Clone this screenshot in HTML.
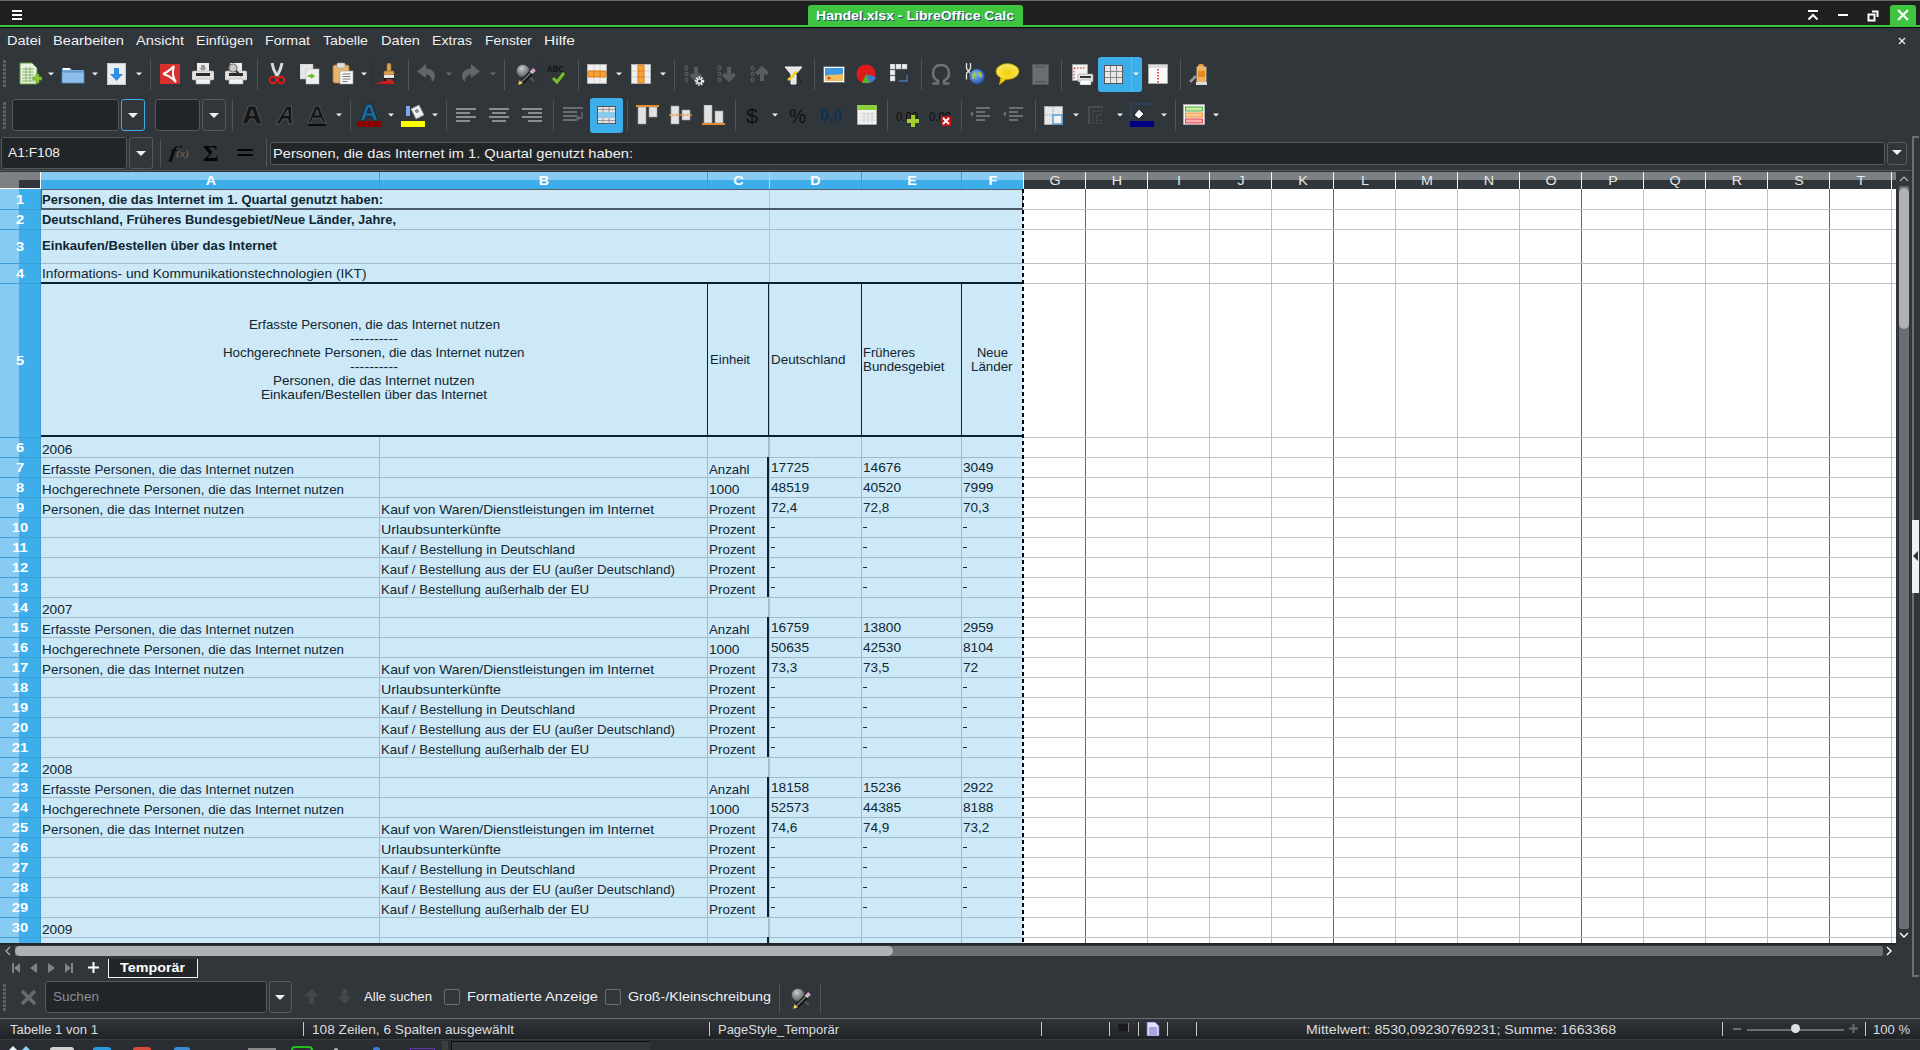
<!DOCTYPE html><html><head><meta charset="utf-8"><style>
html,body{margin:0;padding:0;}
body{width:1920px;height:1050px;overflow:hidden;position:relative;background:#31363b;font-family:"Liberation Sans",sans-serif;}
body>div{position:absolute;}
.t{white-space:pre;transform-origin:0 0;}
</style></head><body>
<div style="left:0px;top:0px;width:1920px;height:1px;background:#6b6b6b;"></div>
<div style="left:0px;top:1px;width:1920px;height:24px;background:#202020;"></div>
<div style="left:0px;top:25px;width:1920px;height:2px;background:#3ec43e;"></div>
<div style="left:0px;top:27px;width:1920px;height:1px;background:#0a0a0a;"></div>
<div style="left:12px;top:10px;width:10px;height:2px;background:#ffffff;"></div>
<div style="left:12px;top:14px;width:10px;height:2px;background:#ffffff;"></div>
<div style="left:12px;top:18px;width:10px;height:2px;background:#ffffff;"></div>
<div style="left:808px;top:5px;width:215px;height:22px;background:#3ec43e;border-radius:3px 3px 0 0;"></div>
<div class="t" style="left:816.00px;top:9.00px;font-size:13px;line-height:13px;color:#ffffff;font-weight:700;font-family:'Liberation Sans',sans-serif;transform:scaleX(1.0789);text-shadow:1px 1px 0 #2a4a7a;">Handel.xlsx - LibreOffice Calc</div>
<svg style="position:absolute;left:1806px;top:8px;" width="14" height="14" viewBox="0 0 14 14"><path d="M2 3h10" stroke="#fff" stroke-width="2"/><path d="M2.5 11.5L7 7l4.5 4.5" stroke="#fff" stroke-width="2" fill="none"/></svg>
<div style="left:1838px;top:14px;width:10px;height:2px;background:#ffffff;"></div>
<svg style="position:absolute;left:1866px;top:8px;" width="14" height="14" viewBox="0 0 14 14"><rect x="2.5" y="6.5" width="6" height="6" stroke="#fff" stroke-width="2" fill="none"/><path d="M6 3.5h5.5v5.5" stroke="#fff" stroke-width="2" fill="none"/></svg>
<div style="left:1890px;top:5px;width:26px;height:20px;background:#3ec43e;border-radius:3px 3px 0 0;"></div>
<svg style="position:absolute;left:1896px;top:8px;" width="14" height="14" viewBox="0 0 14 14"><path d="M2 2l10 10M12 2L2 12" stroke="#fff" stroke-width="2.2"/></svg>
<div style="left:0px;top:28px;width:1920px;height:142px;background:#31363b;"></div>
<div class="t" style="left:7.00px;top:33.57px;font-size:13.5px;line-height:13.5px;color:#eff0f1;font-weight:400;font-family:'Liberation Sans',sans-serif;transform:scaleX(1.0788);">Datei</div>
<div class="t" style="left:53.00px;top:33.57px;font-size:13.5px;line-height:13.5px;color:#eff0f1;font-weight:400;font-family:'Liberation Sans',sans-serif;transform:scaleX(1.0871);">Bearbeiten</div>
<div class="t" style="left:136.00px;top:33.57px;font-size:13.5px;line-height:13.5px;color:#eff0f1;font-weight:400;font-family:'Liberation Sans',sans-serif;transform:scaleX(1.0840);">Ansicht</div>
<div class="t" style="left:196.00px;top:33.57px;font-size:13.5px;line-height:13.5px;color:#eff0f1;font-weight:400;font-family:'Liberation Sans',sans-serif;transform:scaleX(1.0695);">Einfügen</div>
<div class="t" style="left:265.00px;top:33.57px;font-size:13.5px;line-height:13.5px;color:#eff0f1;font-weight:400;font-family:'Liberation Sans',sans-serif;transform:scaleX(1.0522);">Format</div>
<div class="t" style="left:323.00px;top:33.57px;font-size:13.5px;line-height:13.5px;color:#eff0f1;font-weight:400;font-family:'Liberation Sans',sans-serif;transform:scaleX(1.0519);">Tabelle</div>
<div class="t" style="left:381.00px;top:33.57px;font-size:13.5px;line-height:13.5px;color:#eff0f1;font-weight:400;font-family:'Liberation Sans',sans-serif;transform:scaleX(1.0824);">Daten</div>
<div class="t" style="left:432.00px;top:33.57px;font-size:13.5px;line-height:13.5px;color:#eff0f1;font-weight:400;font-family:'Liberation Sans',sans-serif;transform:scaleX(1.0453);">Extras</div>
<div class="t" style="left:485.00px;top:33.57px;font-size:13.5px;line-height:13.5px;color:#eff0f1;font-weight:400;font-family:'Liberation Sans',sans-serif;transform:scaleX(1.0266);">Fenster</div>
<div class="t" style="left:544.00px;top:33.57px;font-size:13.5px;line-height:13.5px;color:#eff0f1;font-weight:400;font-family:'Liberation Sans',sans-serif;transform:scaleX(1.1475);">Hilfe</div>
<svg style="position:absolute;left:1897px;top:36px;" width="10" height="10" viewBox="0 0 10 10"><path d="M2 2l6 6M8 2L2 8" stroke="#eff0f1" stroke-width="1.3"/></svg>
<div style="left:3px;top:60px;width:3px;height:3px;background:#5d6166;"></div>
<div style="left:3px;top:64px;width:3px;height:3px;background:#5d6166;"></div>
<div style="left:3px;top:68px;width:3px;height:3px;background:#5d6166;"></div>
<div style="left:3px;top:72px;width:3px;height:3px;background:#5d6166;"></div>
<div style="left:3px;top:76px;width:3px;height:3px;background:#5d6166;"></div>
<div style="left:3px;top:80px;width:3px;height:3px;background:#5d6166;"></div>
<div style="left:3px;top:84px;width:3px;height:3px;background:#5d6166;"></div>
<div style="left:3px;top:102px;width:3px;height:3px;background:#5d6166;"></div>
<div style="left:3px;top:106px;width:3px;height:3px;background:#5d6166;"></div>
<div style="left:3px;top:110px;width:3px;height:3px;background:#5d6166;"></div>
<div style="left:3px;top:114px;width:3px;height:3px;background:#5d6166;"></div>
<div style="left:3px;top:118px;width:3px;height:3px;background:#5d6166;"></div>
<div style="left:3px;top:122px;width:3px;height:3px;background:#5d6166;"></div>
<div style="left:3px;top:126px;width:3px;height:3px;background:#5d6166;"></div>
<svg style="position:absolute;left:18px;top:62px;" width="24" height="24" viewBox="0 0 24 24"><path d="M2 1h12l5 5v16H2z" fill="#e9f3e0" stroke="#5a9a3a"/><g stroke="#8ab070" stroke-width="1"><path d="M4 7h12M4 10h12M4 13h12M4 16h12M4 19h12M8 5v15M12 5v15"/></g><path d="M15 15h3v-3h3v3h3v3h-3v3h-3v-3h-3z" fill="#8fce3a" stroke="#5c9a20" stroke-width=".8"/></svg>
<svg style="position:absolute;left:48.0px;top:72px;" width="6" height="4" viewBox="0 0 6 4"><path d="M0 0.5h6L3.0 3.5z" fill="#eff0f1"/></svg>
<svg style="position:absolute;left:61px;top:65px;" width="24" height="19" viewBox="0 0 24 19"><path d="M1 3h8l2 2h12v13H1z" fill="#6fa8d8"/><path d="M1 7h22v11H1z" fill="#8cc0ea" stroke="#5a8ab5" stroke-width=".8"/><path d="M2 4h7" stroke="#fff" stroke-width="2"/></svg>
<svg style="position:absolute;left:92.0px;top:72px;" width="6" height="4" viewBox="0 0 6 4"><path d="M0 0.5h6L3.0 3.5z" fill="#eff0f1"/></svg>
<svg style="position:absolute;left:107px;top:63px;" width="19" height="22" viewBox="0 0 19 22"><rect x=".5" y=".5" width="18" height="21" fill="#ececec" stroke="#c8c8c8"/><path d="M7 5h5v6h4l-6.5 7L3 11h4z" fill="#2f8fe0"/></svg>
<svg style="position:absolute;left:136.0px;top:72px;" width="6" height="4" viewBox="0 0 6 4"><path d="M0 0.5h6L3.0 3.5z" fill="#eff0f1"/></svg>
<div style="left:150px;top:59px;width:1px;height:31px;background:#50555a;"></div>
<svg style="position:absolute;left:160px;top:64px;" width="20" height="20" viewBox="0 0 20 20"><rect x="0" y="0" width="20" height="20" fill="#d8302a"/><path d="M3 10C8 8 12 4 14 2M14 2c-2 6-1 12 2 16M3 10c5 1 9 4 13 8" stroke="#fff" stroke-width="2" fill="none"/></svg>
<svg style="position:absolute;left:192px;top:63px;" width="22" height="22" viewBox="0 0 22 22"><rect x="5" y="0" width="12" height="9" fill="#ececec"/><rect x="0" y="8" width="22" height="9" rx="1.5" fill="#e0e0e0" stroke="#bbb" stroke-width=".6"/><rect x="4" y="10" width="14" height="3" fill="#2b2b2b"/><rect x="4" y="16" width="14" height="5" fill="#f4f4f4" stroke="#aaa" stroke-width=".6"/><path d="M9 2h4v3h2l-4 3-4-3h2z" fill="#999"/></svg>
<svg style="position:absolute;left:225px;top:63px;" width="22" height="22" viewBox="0 0 22 22"><rect x="5" y="0" width="12" height="9" fill="#ececec"/><rect x="0" y="8" width="22" height="9" rx="1.5" fill="#e0e0e0" stroke="#bbb" stroke-width=".6"/><rect x="4" y="10" width="14" height="3" fill="#2b2b2b"/><rect x="4" y="16" width="14" height="5" fill="#f4f4f4" stroke="#aaa" stroke-width=".6"/><circle cx="8" cy="5" r="4" fill="#c8c8c8" stroke="#777" stroke-width="1.2"/><path d="M11 8l5 5" stroke="#333" stroke-width="2"/></svg>
<div style="left:257px;top:59px;width:1px;height:31px;background:#50555a;"></div>
<svg style="position:absolute;left:268px;top:62px;" width="18" height="23" viewBox="0 0 18 23"><path d="M4 1c1 6 3 10 5 13M14 1c-1 6-3 10-5 13" stroke="#d9d9d9" stroke-width="3" fill="none"/><circle cx="5" cy="18" r="3.2" fill="none" stroke="#e01818" stroke-width="2"/><circle cx="13" cy="18" r="3.2" fill="none" stroke="#e01818" stroke-width="2"/></svg>
<svg style="position:absolute;left:300px;top:64px;" width="20" height="21" viewBox="0 0 20 21"><rect x="0" y="0" width="13" height="15" fill="#e6e6e6" stroke="#bbb" stroke-width=".6"/><rect x="6" y="5" width="13" height="15" fill="#efefef" stroke="#bbb" stroke-width=".6"/><path d="M8 12h5l-2-2M13 12l-2 2" stroke="#6cbf2a" stroke-width="2" fill="none"/></svg>
<svg style="position:absolute;left:332px;top:62px;" width="22" height="23" viewBox="0 0 22 23"><rect x="1" y="3" width="16" height="18" rx="2" fill="#e6b46a" stroke="#b07a30" stroke-width=".8"/><rect x="5" y="1" width="8" height="5" rx="1" fill="#e0e0e0" stroke="#999" stroke-width=".6"/><rect x="8" y="9" width="13" height="13" fill="#f8f8f8" stroke="#999" stroke-width=".6"/><path d="M10.5 12h8M10.5 14.5h8M10.5 17h8M10.5 19.5h5" stroke="#777" stroke-width="1"/></svg>
<svg style="position:absolute;left:361.0px;top:72px;" width="6" height="4" viewBox="0 0 6 4"><path d="M0 0.5h6L3.0 3.5z" fill="#eff0f1"/></svg>
<div style="left:371px;top:59px;width:1px;height:31px;background:#2c3035;"></div>
<svg style="position:absolute;left:375px;top:63px;" width="22" height="23" viewBox="0 0 22 23"><rect x="12" y="0" width="4" height="9" rx="2" fill="#e0a050" stroke="#a06a20" stroke-width=".6"/><rect x="9" y="8" width="10" height="4" rx="1" fill="#d8a050" stroke="#a06a20" stroke-width=".6"/><rect x="9" y="12" width="10" height="3" fill="#e8e8e8"/><rect x="9" y="15" width="10" height="5" fill="#181818"/><path d="M9 18h10v3H0z" fill="#d81818"/><path d="M11 17h7" stroke="#f06060" stroke-width="1"/></svg>
<div style="left:408px;top:59px;width:1px;height:31px;background:#50555a;"></div>
<svg style="position:absolute;left:417px;top:64px;" width="18" height="18" viewBox="0 0 18 18"><path d="M0 7.5L9 0V4.5C14 4.5 18 8 18 12C18 14.5 16.5 16.8 14.5 18C15.5 14.5 13 10.8 9 10.5V14Z" fill="#62666a"/></svg>
<svg style="position:absolute;left:446.0px;top:72px;" width="6" height="4" viewBox="0 0 6 4"><path d="M0 0.5h6L3.0 3.5z" fill="#6a6e72"/></svg>
<svg style="position:absolute;left:462px;top:64px;" width="18" height="18" viewBox="0 0 18 18"><path transform="translate(18 0) scale(-1 1)" d="M0 7.5L9 0V4.5C14 4.5 18 8 18 12C18 14.5 16.5 16.8 14.5 18C15.5 14.5 13 10.8 9 10.5V14Z" fill="#62666a"/></svg>
<svg style="position:absolute;left:490.0px;top:72px;" width="6" height="4" viewBox="0 0 6 4"><path d="M0 0.5h6L3.0 3.5z" fill="#6a6e72"/></svg>
<div style="left:504px;top:59px;width:1px;height:31px;background:#50555a;"></div>
<svg style="position:absolute;left:514px;top:62px;" width="24" height="24" viewBox="0 0 24 24"><defs><radialGradient id="mg" cx="40%" cy="30%" r="70%"><stop offset="0" stop-color="#c8c8c8"/><stop offset="1" stop-color="#5a5c5e"/></radialGradient></defs><circle cx="9" cy="9" r="6.5" fill="url(#mg)" stroke="#3a3c3e" stroke-width=".8"/><path d="M14 14l6 5" stroke="#555" stroke-width="2.2"/><path d="M6.5 21.5l11-11" stroke="#111" stroke-width="4.6"/><path d="M7 20.5l10-10" stroke="#666" stroke-width="2"/><path d="M15.8 9.5l1.6-1.6 2.6 2.6-1.6 1.6z" fill="#cfcfcf"/><path d="M17.4 7.9l1.8-1.8 2.6 2.6-1.8 1.8z" fill="#e8a0e0"/><path d="M4 23l1.5-5 3.5 3.5z" fill="#f0e070" stroke="#6a6020" stroke-width=".6"/></svg>
<div style="left:541px;top:59px;width:1px;height:31px;background:#2c3035;"></div>
<div class="t" style="left:547.00px;top:65.38px;font-size:9px;line-height:9px;color:#111111;font-weight:700;font-family:'Liberation Sans',sans-serif;transform:scaleX(0.8718);">ABC</div>
<svg style="position:absolute;left:552px;top:72px;" width="13" height="12" viewBox="0 0 13 12"><path d="M1 6l4 4 7-9" stroke="#72c02c" stroke-width="3" fill="none"/></svg>
<div style="left:578px;top:59px;width:1px;height:31px;background:#50555a;"></div>
<svg style="position:absolute;left:587px;top:64px;" width="20" height="20" viewBox="0 0 20 20"><rect x=".5" y=".5" width="19" height="19" fill="#f0f0f0" stroke="#bbb" stroke-width=".8"/><path d="M7 1v18M13 1v18M1 7h18M1 13h18" stroke="#ccc" stroke-width=".8"/><rect x="1" y="7" width="18" height="6" rx="1" fill="#f7a23a" stroke="#d87000" stroke-width=".8"/><path d="M7 7v6M13 7v6" stroke="#d87000" stroke-width=".8"/></svg>
<svg style="position:absolute;left:616.0px;top:72px;" width="6" height="4" viewBox="0 0 6 4"><path d="M0 0.5h6L3.0 3.5z" fill="#eff0f1"/></svg>
<svg style="position:absolute;left:631px;top:64px;" width="20" height="20" viewBox="0 0 20 20"><rect x=".5" y=".5" width="19" height="19" fill="#f0f0f0" stroke="#bbb" stroke-width=".8"/><path d="M7 1v18M13 1v18M1 7h18M1 13h18" stroke="#ccc" stroke-width=".8"/><rect x="7" y="1" width="6" height="18" rx="1" fill="#f7a23a" stroke="#d87000" stroke-width=".8"/><path d="M7 7h6M7 13h6" stroke="#d87000" stroke-width=".8"/></svg>
<svg style="position:absolute;left:660.0px;top:72px;" width="6" height="4" viewBox="0 0 6 4"><path d="M0 0.5h6L3.0 3.5z" fill="#eff0f1"/></svg>
<div style="left:674px;top:59px;width:1px;height:31px;background:#50555a;"></div>
<svg style="position:absolute;left:683px;top:64px;" width="24" height="24" viewBox="0 0 24 24"><ellipse cx="3.5" cy="4" rx="1.4" ry="1.8" fill="none" stroke="#585c60" stroke-width="1.2"/><ellipse cx="3.5" cy="10" rx="1.4" ry="1.8" fill="none" stroke="#585c60" stroke-width="1.2"/><ellipse cx="3.5" cy="16" rx="1.4" ry="1.8" fill="none" stroke="#585c60" stroke-width="1.2"/><path d="M13 3v12M8 10.5l5 5 5-5" stroke="#585c60" stroke-width="4" fill="none" stroke-linejoin="miter"/><circle cx="16.5" cy="17" r="3.6" fill="none" stroke="#e8e8e8" stroke-width="2.4" stroke-dasharray="1.6 1"/><circle cx="16.5" cy="17" r="2.2" fill="none" stroke="#e8e8e8" stroke-width="1.3"/></svg>
<svg style="position:absolute;left:716px;top:64px;" width="24" height="24" viewBox="0 0 24 24"><ellipse cx="3.5" cy="4" rx="1.4" ry="1.8" fill="none" stroke="#585c60" stroke-width="1.2"/><ellipse cx="3.5" cy="10" rx="1.4" ry="1.8" fill="none" stroke="#585c60" stroke-width="1.2"/><ellipse cx="3.5" cy="16" rx="1.4" ry="1.8" fill="none" stroke="#585c60" stroke-width="1.2"/><path d="M13 3v12.5M7.5 10l5.5 5.5 5.5-5.5" stroke="#585c60" stroke-width="4" fill="none"/></svg>
<svg style="position:absolute;left:749px;top:64px;" width="24" height="24" viewBox="0 0 24 24"><ellipse cx="3.5" cy="4" rx="1.4" ry="1.8" fill="none" stroke="#585c60" stroke-width="1.2"/><ellipse cx="3.5" cy="10" rx="1.4" ry="1.8" fill="none" stroke="#585c60" stroke-width="1.2"/><ellipse cx="3.5" cy="16" rx="1.4" ry="1.8" fill="none" stroke="#585c60" stroke-width="1.2"/><path d="M13 17V4.5M7.5 10l5.5-5.5 5.5 5.5" stroke="#585c60" stroke-width="4" fill="none"/></svg>
<svg style="position:absolute;left:784px;top:65px;" width="19" height="20" viewBox="0 0 19 20"><path d="M1 2h17l-6 7v10h-5V9z" fill="#e6e6e6" stroke="#f8f8f8" stroke-width="1"/><path d="M4 15l4-3 3-4 2-1" stroke="#f0d020" stroke-width="2.6" fill="none"/><path d="M13 8l4 9" stroke="#222" stroke-width="1.2"/></svg>
<div style="left:814px;top:59px;width:1px;height:31px;background:#50555a;"></div>
<svg style="position:absolute;left:823px;top:66px;" width="22" height="17" viewBox="0 0 22 17"><rect x=".5" y=".5" width="21" height="16" fill="#fff" stroke="#666" stroke-width=".8"/><rect x="2" y="2" width="18" height="13" fill="#3e9ae0"/><path d="M2 10c5-2 12-1 18-2v7H2z" fill="#f0c060"/><circle cx="6" cy="12" r="1.5" fill="#e04020"/></svg>
<svg style="position:absolute;left:856px;top:63px;" width="21" height="22" viewBox="0 0 21 22"><circle cx="10" cy="11" r="9.5" fill="#e01a1a"/><path d="M10 11l10 3a10 10 0 0 1-6 6z" fill="#3a7ad0"/><path d="M10 11l4 9-8 0z" fill="#50b030"/></svg>
<svg style="position:absolute;left:890px;top:64px;" width="20" height="21" viewBox="0 0 20 21"><g fill="#eee" stroke="#aaa" stroke-width=".5"><rect x="0" y="0" width="5" height="5"/><rect x="6" y="0" width="5" height="5"/><rect x="12" y="0" width="5" height="5"/><rect x="0" y="6" width="5" height="5"/><rect x="0" y="12" width="5" height="5"/></g><path d="M9 17h8v-6" stroke="#4a7ab0" stroke-width="1.3" fill="none"/></svg>
<div style="left:921px;top:59px;width:1px;height:31px;background:#50555a;"></div>
<svg style="position:absolute;left:931px;top:64px;" width="20" height="21" viewBox="0 0 20 21"><path d="M1.5 19.5h5.5v-2.5C3.5 15 2 12 2 9c0-5 3.5-8 8-8s8 3 8 8c0 3-1.5 6-5 8v2.5h5.5" stroke="#6f7377" stroke-width="2.6" fill="none"/></svg>
<svg style="position:absolute;left:964px;top:62px;" width="22" height="24" viewBox="0 0 22 24"><defs><radialGradient id="gl" cx="40%" cy="35%" r="65%"><stop offset="0" stop-color="#8ab8f0"/><stop offset="1" stop-color="#2a5ab0"/></radialGradient></defs><path d="M2.5 1v5.5M6.5 1v5.5M2.5 6.5l4 5M6.5 6.5l-4 5M2.5 11.5v6M6.5 11.5v6" stroke="#e8e8e8" stroke-width="1.3" fill="none"/><circle cx="13" cy="14.5" r="7.5" fill="url(#gl)" stroke="#2a4a90" stroke-width=".8"/><path d="M9 11c1.5-1 3 0 3 1.5s-2 1-1.5 3-1.5 2-2 1 -.5-4.5.5-5.5zM14.5 10c1.5 0 3 1 3.5 3s-1 3-2 2-1-1.5-1.5-3 -1-2 0-2z" fill="#a8c838"/></svg>
<svg style="position:absolute;left:995px;top:63px;" width="25" height="23" viewBox="0 0 25 23"><defs><radialGradient id="yb" cx="50%" cy="60%" r="60%"><stop offset="0" stop-color="#f0d000"/><stop offset="1" stop-color="#f8e870"/></radialGradient></defs><ellipse cx="12.5" cy="8.5" rx="11.3" ry="7.8" fill="url(#yb)" stroke="#d0a800" stroke-width=".9"/><path d="M6 14l-1.5 7.5 7-5.5" fill="#f0d000" stroke="#d0a800" stroke-width=".8"/></svg>
<svg style="position:absolute;left:1032px;top:64px;" width="17" height="21" viewBox="0 0 17 21"><rect x=".5" y=".5" width="16" height="20" fill="#6a6e72" stroke="#555" stroke-width=".8"/><path d="M3 3h11M3 18h11" stroke="#4a4e52" stroke-width="1"/></svg>
<div style="left:1061px;top:59px;width:1px;height:31px;background:#50555a;"></div>
<svg style="position:absolute;left:1072px;top:64px;" width="22" height="21" viewBox="0 0 22 21"><rect x=".5" y=".5" width="15" height="16" fill="#f3f3f3" stroke="#aaa" stroke-width=".6"/><path d="M2 4h12M2 4v12" stroke="#d02020" stroke-width="1" stroke-dasharray="1.5 1.5"/><rect x="6" y="10" width="15" height="8" rx="1" fill="#e6e6e6" stroke="#999" stroke-width=".6"/><rect x="8" y="12" width="11" height="2" fill="#333"/><rect x="8" y="16" width="11" height="5" fill="#fafafa" stroke="#999" stroke-width=".5"/></svg>
<div style="left:1098px;top:57px;width:44px;height:35px;background:#3daee9;border-radius:3px;"></div>
<div style="left:1131px;top:58px;width:1px;height:33px;background:#58bdf0;"></div>
<svg style="position:absolute;left:1104px;top:65px;" width="19" height="19" viewBox="0 0 19 19"><rect x=".5" y=".5" width="18" height="18" fill="#e8e8e8" stroke="#555" stroke-width="1"/><path d="M6.5 1v17M12.5 1v17M1 6.5h17M1 12.5h17" stroke="#888" stroke-width="1"/></svg>
<svg style="position:absolute;left:1133.0px;top:72px;" width="6" height="4" viewBox="0 0 6 4"><path d="M0 0.5h6L3.0 3.5z" fill="#eff0f1"/></svg>
<svg style="position:absolute;left:1148px;top:64px;" width="20" height="20" viewBox="0 0 20 20"><rect x=".5" y=".5" width="19" height="19" fill="#fafafa" stroke="#bbb" stroke-width=".6"/><rect x="1" y="1" width="18" height="3" fill="#ddd"/><path d="M10 5v14" stroke="#e02020" stroke-width="1.5" stroke-dasharray="1.5 1.5"/></svg>
<div style="left:1180px;top:59px;width:1px;height:31px;background:#50555a;"></div>
<svg style="position:absolute;left:1187px;top:62px;" width="24" height="24" viewBox="0 0 24 24"><rect x="11" y="2" width="6" height="4" rx="2" fill="#f0a030"/><rect x="10" y="5" width="9" height="15" fill="#f2b050" stroke="#ccc" stroke-width=".8"/><rect x="11" y="9" width="7" height="6" fill="#e88a20"/><rect x="9" y="20" width="11" height="3" fill="#ddd"/><path d="M1 22l8-8" stroke="#999" stroke-width="2.5"/><path d="M1 22l2-2" stroke="#222" stroke-width="2.5"/></svg>
<div style="left:12px;top:99px;width:107px;height:32px;background:#232629;box-sizing:border-box;border:1px solid #55595e;border-radius:3px;"></div>
<div style="left:121px;top:99px;width:24px;height:32px;background:#31363b;box-sizing:border-box;border:1px solid #3daee9;border-radius:3px;"></div>
<svg style="position:absolute;left:127.0px;top:112.0px;" width="12" height="7" viewBox="0 0 12 7"><path d="M1 1h10L6 6z" fill="#eff0f1"/></svg>
<div style="left:155px;top:99px;width:45px;height:32px;background:#232629;box-sizing:border-box;border:1px solid #55595e;border-radius:3px;"></div>
<div style="left:202px;top:99px;width:24px;height:32px;background:#31363b;box-sizing:border-box;border:1px solid #55595e;border-radius:3px;"></div>
<svg style="position:absolute;left:208.0px;top:112.0px;" width="12" height="7" viewBox="0 0 12 7"><path d="M1 1h10L6 6z" fill="#eff0f1"/></svg>
<div style="left:232px;top:100px;width:1px;height:31px;background:#50555a;"></div>
<svg style="position:absolute;left:241px;top:105px;" width="22" height="20" viewBox="0 0 22 20"><g transform="translate(1 1)"><path d="M0 18L6.5 0H13.5L20 18H15L12.0 12.959999999999999H8.0L5 18Z M10.0 3.96L12.052 9.36H7.948Z" fill="#161616" fill-rule="evenodd" stroke="#5c5c5c" stroke-width="0.8"/></g></svg>
<svg style="position:absolute;left:275px;top:105px;" width="23.4" height="20" viewBox="0 0 23.4 20"><g transform="translate(1 1)"><path transform="translate(4.9 0) skewX(-15)" d="M0 18L5.550000000000001 0H10.45L16 18H12.5L10.399999999999999 12.959999999999999H5.6000000000000005L3.5 18Z M8.0 3.96L10.052 9.36H5.948Z" fill="#161616" fill-rule="evenodd" stroke="#5c5c5c" stroke-width="0.8"/></g></svg>
<svg style="position:absolute;left:307px;top:105px;" width="20" height="19" viewBox="0 0 20 19"><g transform="translate(1 1)"><path d="M0 17L6.9 0H11.1L18 17H15L13.2 12.24H4.800000000000001L3 17Z M9.0 3.74L10.938 8.84H7.062Z" fill="#161616" fill-rule="evenodd" stroke="#5c5c5c" stroke-width="0.8"/></g></svg>
<div style="left:308px;top:124px;width:18px;height:2px;background:#0a0a0a;"></div>
<svg style="position:absolute;left:336.0px;top:113px;" width="6" height="4" viewBox="0 0 6 4"><path d="M0 0.5h6L3.0 3.5z" fill="#eff0f1"/></svg>
<div style="left:350px;top:100px;width:1px;height:31px;background:#50555a;"></div>
<svg style="position:absolute;left:359px;top:103px;" width="20" height="19" viewBox="0 0 20 19"><g transform="translate(1 1)"><path d="M0 17L6.2 0H11.8L18 17H14L11.6 12.24H6.4L4 17Z M9.0 3.74L10.938 8.84H7.062Z" fill="#1f6a95" fill-rule="evenodd" stroke="#0a2030" stroke-width="0.8"/></g></svg>
<div style="left:357px;top:121px;width:24px;height:6px;background:#8b0000;"></div>
<svg style="position:absolute;left:388.0px;top:113px;" width="6" height="4" viewBox="0 0 6 4"><path d="M0 0.5h6L3.0 3.5z" fill="#eff0f1"/></svg>
<svg style="position:absolute;left:404px;top:104px;" width="20" height="17" viewBox="0 0 20 17"><rect x="2" y="2" width="4" height="10" fill="#7aa8e8"/><path d="M7 5l8-4 5 10-8 4z" fill="#eee" stroke="#999" stroke-width=".8"/><circle cx="13" cy="7" r="1.3" fill="none" stroke="#555"/></svg>
<div style="left:401px;top:121px;width:24px;height:6px;background:#ffff00;"></div>
<svg style="position:absolute;left:432.0px;top:113px;" width="6" height="4" viewBox="0 0 6 4"><path d="M0 0.5h6L3.0 3.5z" fill="#eff0f1"/></svg>
<div style="left:446px;top:100px;width:1px;height:31px;background:#50555a;"></div>
<div style="left:456px;top:108px;width:20px;height:2px;background:#8a8e92;"></div>
<div style="left:456px;top:112px;width:14px;height:2px;background:#8a8e92;"></div>
<div style="left:456px;top:116px;width:20px;height:2px;background:#8a8e92;"></div>
<div style="left:456px;top:120px;width:14px;height:2px;background:#8a8e92;"></div>
<div style="left:489px;top:108px;width:20px;height:2px;background:#8a8e92;"></div>
<div style="left:492px;top:112px;width:14px;height:2px;background:#8a8e92;"></div>
<div style="left:489px;top:116px;width:20px;height:2px;background:#8a8e92;"></div>
<div style="left:492px;top:120px;width:14px;height:2px;background:#8a8e92;"></div>
<div style="left:522px;top:108px;width:20px;height:2px;background:#8a8e92;"></div>
<div style="left:528px;top:112px;width:14px;height:2px;background:#8a8e92;"></div>
<div style="left:522px;top:116px;width:20px;height:2px;background:#8a8e92;"></div>
<div style="left:528px;top:120px;width:14px;height:2px;background:#8a8e92;"></div>
<div style="left:553px;top:100px;width:1px;height:31px;background:#50555a;"></div>
<svg style="position:absolute;left:563px;top:107px;" width="20" height="16" viewBox="0 0 20 16"><path d="M0 1h20M0 5h14M0 9h14M0 13h14" stroke="#6a6e72" stroke-width="2"/><path d="M19 5v6h-5M16 9l-2 2 2 2" stroke="#6a6e72" stroke-width="1.3" fill="none"/></svg>
<div style="left:590px;top:98px;width:33px;height:35px;background:#3daee9;border-radius:3px;"></div>
<svg style="position:absolute;left:597px;top:106px;" width="19" height="18" viewBox="0 0 19 18"><rect x=".5" y=".5" width="18" height="17" fill="#e4e4e4" stroke="#555" stroke-width="1"/><rect x="1" y="6" width="17" height="6" fill="#8ccaf0"/><path d="M1 3.5h17M1 14.5h17M6 1v5M12 1v5M6 12v6M12 12v6" stroke="#888" stroke-width=".8"/></svg>
<div style="left:627px;top:100px;width:1px;height:31px;background:#50555a;"></div>
<svg style="position:absolute;left:636px;top:105px;" width="23" height="20" viewBox="0 0 23 20"><rect x="0" y="0" width="23" height="2" fill="#f08a20"/><rect x="2" y="2" width="8" height="17" fill="#e2e2e2" stroke="#999" stroke-width=".6"/><rect x="13" y="2" width="8" height="10" fill="#e2e2e2" stroke="#999" stroke-width=".6"/></svg>
<svg style="position:absolute;left:669px;top:105px;" width="23" height="20" viewBox="0 0 23 20"><rect x="2" y="1" width="8" height="18" fill="#e2e2e2" stroke="#999" stroke-width=".6"/><rect x="13" y="5" width="8" height="10" fill="#e2e2e2" stroke="#999" stroke-width=".6"/><path d="M0 10h23" stroke="#f08a20" stroke-width="1.6" stroke-dasharray="2 1.5"/></svg>
<svg style="position:absolute;left:702px;top:105px;" width="23" height="20" viewBox="0 0 23 20"><rect x="0" y="18" width="23" height="2" fill="#f08a20"/><rect x="2" y="0" width="8" height="18" fill="#e2e2e2" stroke="#999" stroke-width=".6"/><rect x="13" y="6" width="8" height="12" fill="#e2e2e2" stroke="#999" stroke-width=".6"/></svg>
<div style="left:735px;top:100px;width:1px;height:31px;background:#50555a;"></div>
<div class="t" style="left:746.00px;top:105.22px;font-size:21px;line-height:21px;color:#111;font-weight:400;font-family:'Liberation Sans',sans-serif;transform:scaleX(1.0267);">$</div>
<svg style="position:absolute;left:772.0px;top:113px;" width="6" height="4" viewBox="0 0 6 4"><path d="M0 0.5h6L3.0 3.5z" fill="#eff0f1"/></svg>
<div class="t" style="left:789.00px;top:105.22px;font-size:21px;line-height:21px;color:#111;font-weight:400;font-family:'Liberation Sans',sans-serif;transform:scaleX(0.9097);">%</div>
<div class="t" style="left:820.00px;top:106.61px;font-size:17px;line-height:17px;color:#0e3152;font-weight:700;font-family:'Liberation Sans',sans-serif;transform:scaleX(0.9306);">0,0</div>
<svg style="position:absolute;left:857px;top:105px;" width="20" height="20" viewBox="0 0 20 20"><rect x=".5" y="1" width="19" height="18.5" fill="#f2f2f2" stroke="#bbb" stroke-width=".6"/><rect x="0" y="0" width="20" height="5" rx="1" fill="#8cd040"/><path d="M3 9h15M3 12h15M3 15h15M7 7v11M11 7v11M15 7v11" stroke="#ccc" stroke-width=".8"/></svg>
<div style="left:887px;top:100px;width:1px;height:31px;background:#50555a;"></div>
<div class="t" style="left:896.00px;top:110.00px;font-size:13px;line-height:13px;color:#0c0c0c;font-weight:400;font-family:'Liberation Sans',sans-serif;transform:scaleX(0.8691);">0.00</div>
<svg style="position:absolute;left:907px;top:115px;" width="12" height="12" viewBox="0 0 12 12"><path d="M4 0h4v4h4v4H8v4H4V8H0V4h4z" fill="#a0d030"/></svg>
<div class="t" style="left:929.00px;top:110.00px;font-size:13px;line-height:13px;color:#0c0c0c;font-weight:400;font-family:'Liberation Sans',sans-serif;transform:scaleX(0.8691);">0.00</div>
<svg style="position:absolute;left:941px;top:116px;" width="10" height="10" viewBox="0 0 10 10"><rect x="0" y="0" width="10" height="10" fill="#c01818"/><path d="M2 2l6 6M8 2L2 8" stroke="#fff" stroke-width="1.8"/></svg>
<div style="left:961px;top:100px;width:1px;height:31px;background:#50555a;"></div>
<svg style="position:absolute;left:971px;top:107px;" width="20" height="16" viewBox="0 0 20 16"><path d="M5 1h14M5 5h9M5 9h14M5 13h9" stroke="#6a6e72" stroke-width="1.8"/><path d="M0 4l3 3-3 3z" fill="#6a6e72"/></svg>
<svg style="position:absolute;left:1003px;top:107px;" width="20" height="16" viewBox="0 0 20 16"><path d="M6 1h14M6 5h9M6 9h14M6 13h9" stroke="#6a6e72" stroke-width="1.8"/><path d="M3 4L0 7l3 3z" fill="#6a6e72"/></svg>
<div style="left:1035px;top:100px;width:1px;height:31px;background:#50555a;"></div>
<svg style="position:absolute;left:1044px;top:106px;" width="19" height="19" viewBox="0 0 19 19"><rect x=".5" y=".5" width="18" height="18" fill="#e8e8e8" stroke="#bbb" stroke-width=".6"/><path d="M9 1v8M1 9h8" stroke="#888" stroke-width=".8" stroke-dasharray="1 1"/><rect x="9" y="9" width="9" height="9" fill="#f2f2f2" stroke="#2f8fe0" stroke-width="1.2"/></svg>
<svg style="position:absolute;left:1073.0px;top:113px;" width="6" height="4" viewBox="0 0 6 4"><path d="M0 0.5h6L3.0 3.5z" fill="#eff0f1"/></svg>
<svg style="position:absolute;left:1088px;top:106px;" width="16" height="19" viewBox="0 0 16 19"><path d="M1 18V1h14" stroke="#555" stroke-width="1.5" fill="none"/><path d="M5 18V5h10M9 18V9h6M13 18v-5" stroke="#666" stroke-width="1" stroke-dasharray="1.5 1.5" fill="none"/></svg>
<svg style="position:absolute;left:1117.0px;top:113px;" width="6" height="4" viewBox="0 0 6 4"><path d="M0 0.5h6L3.0 3.5z" fill="#eff0f1"/></svg>
<svg style="position:absolute;left:1130px;top:103px;" width="25" height="25" viewBox="0 0 25 25"><path d="M1 0v16M1 1h23" stroke="#2a4a7a" stroke-width="1"/><path d="M4 12l5-6 5 5-5 5z" fill="#fff" stroke="#222" stroke-width="1"/></svg>
<div style="left:1130px;top:121px;width:24px;height:6px;background:#000080;"></div>
<svg style="position:absolute;left:1161.0px;top:113px;" width="6" height="4" viewBox="0 0 6 4"><path d="M0 0.5h6L3.0 3.5z" fill="#eff0f1"/></svg>
<div style="left:1175px;top:100px;width:1px;height:31px;background:#50555a;"></div>
<svg style="position:absolute;left:1183px;top:104px;" width="22" height="21" viewBox="0 0 22 21"><rect x=".5" y=".5" width="21" height="20" fill="#f2f2f2" stroke="#bbb" stroke-width=".6"/><rect x="2.5" y="3" width="17" height="4" fill="#c8f0a0" stroke="#30a030" stroke-width=".8"/><rect x="2.5" y="9" width="17" height="4" fill="#ffd090" stroke="#f08020" stroke-width=".8"/><rect x="2.5" y="15" width="17" height="4" fill="#ffb0b0" stroke="#e02020" stroke-width=".8"/></svg>
<svg style="position:absolute;left:1213.0px;top:113px;" width="6" height="4" viewBox="0 0 6 4"><path d="M0 0.5h6L3.0 3.5z" fill="#eff0f1"/></svg>
<div style="left:1px;top:137px;width:126px;height:32px;background:#232629;box-sizing:border-box;border:1px solid #55595e;border-radius:3px;"></div>
<div class="t" style="left:8.00px;top:145.57px;font-size:13.5px;line-height:13.5px;color:#eff0f1;font-weight:400;font-family:'Liberation Sans',sans-serif;transform:scaleX(1.0187);">A1:F108</div>
<div style="left:129px;top:137px;width:24px;height:32px;background:#31363b;box-sizing:border-box;border:1px solid #55595e;border-radius:3px;"></div>
<svg style="position:absolute;left:135px;top:150px;" width="12" height="7" viewBox="0 0 12 7"><path d="M1 1h10L6 6z" fill="#eff0f1"/></svg>
<div style="left:160px;top:139px;width:1px;height:28px;background:#50555a;"></div>
<div class="t" style="left:168.00px;top:143.61px;font-size:17px;line-height:17px;color:#0a0a0a;font-weight:400;font-family:'Liberation Serif',sans-serif;font-style:italic;transform:scaleX(2.1122);">f</div>
<div class="t" style="left:176.00px;top:149.11px;font-size:10.5px;line-height:10.5px;color:#6a6050;font-weight:700;font-family:'Liberation Serif',sans-serif;font-style:italic;transform:scaleX(1.0612);">(x)</div>
<div class="t" style="left:203.00px;top:140.68px;font-size:24px;line-height:24px;color:#050505;font-weight:700;font-family:'Liberation Serif',sans-serif;transform:scaleX(0.9871);">Σ</div>
<div style="left:237px;top:149px;width:16px;height:2px;background:#050505;border-radius:1px;"></div>
<div style="left:237px;top:154px;width:16px;height:2px;background:#050505;border-radius:1px;"></div>
<div style="left:266px;top:139px;width:1px;height:28px;background:#50555a;"></div>
<div style="left:270px;top:142px;width:1615px;height:23px;background:#232629;box-sizing:border-box;border:1px solid #55595e;border-radius:3px;"></div>
<div class="t" style="left:273.00px;top:146.57px;font-size:13.5px;line-height:13.5px;color:#eff0f1;font-weight:400;font-family:'Liberation Sans',sans-serif;transform:scaleX(1.0828);">Personen, die das Internet im 1. Quartal genutzt haben:</div>
<div style="left:1887px;top:142px;width:20px;height:23px;background:#31363b;box-sizing:border-box;border:1px solid #55595e;border-radius:3px;"></div>
<svg style="position:absolute;left:1891px;top:149px;" width="12" height="7" viewBox="0 0 12 7"><path d="M1 1h10L6 6z" fill="#eff0f1"/></svg>
<div style="left:0px;top:170px;width:1911px;height:1px;background:#55595e;"></div>
<div style="left:0px;top:172px;width:1896px;height:8px;background:#7e8184;"></div>
<div style="left:0px;top:180px;width:1896px;height:9px;background:#31363b;"></div>
<div style="left:0px;top:172px;width:40px;height:17px;background:#7e8184;"></div>
<div style="left:19px;top:180px;width:21px;height:9px;background:#31363b;"></div>
<div style="left:40px;top:172px;width:1px;height:17px;background:#ffffff;"></div>
<div style="left:0px;top:188px;width:41px;height:1px;background:#ffffff;"></div>
<div style="left:41px;top:172px;width:982px;height:8px;background:#87cbf2;"></div>
<div style="left:41px;top:180px;width:982px;height:9px;background:#3daee9;"></div>
<div class="t" style="left:211.00px;top:174.00px;font-size:13px;line-height:13px;color:#ffffff;font-weight:700;font-family:'Liberation Sans',sans-serif;width:338px;text-align:center;margin-left:-169.0px;transform:scaleX(1.1);transform-origin:50% 0;">A</div>
<div style="left:379px;top:172px;width:1px;height:17px;background:#3b9fd6;"></div>
<div class="t" style="left:544.00px;top:174.00px;font-size:13px;line-height:13px;color:#ffffff;font-weight:700;font-family:'Liberation Sans',sans-serif;width:328px;text-align:center;margin-left:-164.0px;transform:scaleX(1.1);transform-origin:50% 0;">B</div>
<div style="left:707px;top:172px;width:1px;height:17px;background:#3b9fd6;"></div>
<div class="t" style="left:738.50px;top:174.00px;font-size:13px;line-height:13px;color:#ffffff;font-weight:700;font-family:'Liberation Sans',sans-serif;width:61px;text-align:center;margin-left:-30.5px;transform:scaleX(1.1);transform-origin:50% 0;">C</div>
<div style="left:769px;top:172px;width:1px;height:17px;background:#c8d0d6;"></div>
<div class="t" style="left:815.50px;top:174.00px;font-size:13px;line-height:13px;color:#ffffff;font-weight:700;font-family:'Liberation Sans',sans-serif;width:93px;text-align:center;margin-left:-46.5px;transform:scaleX(1.1);transform-origin:50% 0;">D</div>
<div style="left:861px;top:172px;width:1px;height:17px;background:#3b9fd6;"></div>
<div class="t" style="left:912.00px;top:174.00px;font-size:13px;line-height:13px;color:#ffffff;font-weight:700;font-family:'Liberation Sans',sans-serif;width:100px;text-align:center;margin-left:-50.0px;transform:scaleX(1.1);transform-origin:50% 0;">E</div>
<div style="left:961px;top:172px;width:1px;height:17px;background:#3b9fd6;"></div>
<div class="t" style="left:993.00px;top:174.00px;font-size:13px;line-height:13px;color:#ffffff;font-weight:700;font-family:'Liberation Sans',sans-serif;width:62px;text-align:center;margin-left:-31.0px;transform:scaleX(1.1);transform-origin:50% 0;">F</div>
<div style="left:1023px;top:172px;width:1px;height:17px;background:#f4f4f4;"></div>
<div class="t" style="left:1055.00px;top:174.00px;font-size:13px;line-height:13px;color:#e6e6e6;font-weight:400;font-family:'Liberation Sans',sans-serif;width:62px;text-align:center;margin-left:-31.0px;transform:scaleX(1.1);transform-origin:50% 0;">G</div>
<div style="left:1085px;top:172px;width:1px;height:17px;background:#f4f4f4;"></div>
<div class="t" style="left:1117.00px;top:174.00px;font-size:13px;line-height:13px;color:#e6e6e6;font-weight:400;font-family:'Liberation Sans',sans-serif;width:62px;text-align:center;margin-left:-31.0px;transform:scaleX(1.1);transform-origin:50% 0;">H</div>
<div style="left:1147px;top:172px;width:1px;height:17px;background:#f4f4f4;"></div>
<div class="t" style="left:1179.00px;top:174.00px;font-size:13px;line-height:13px;color:#e6e6e6;font-weight:400;font-family:'Liberation Sans',sans-serif;width:62px;text-align:center;margin-left:-31.0px;transform:scaleX(1.1);transform-origin:50% 0;">I</div>
<div style="left:1209px;top:172px;width:1px;height:17px;background:#f4f4f4;"></div>
<div class="t" style="left:1241.00px;top:174.00px;font-size:13px;line-height:13px;color:#e6e6e6;font-weight:400;font-family:'Liberation Sans',sans-serif;width:62px;text-align:center;margin-left:-31.0px;transform:scaleX(1.1);transform-origin:50% 0;">J</div>
<div style="left:1271px;top:172px;width:1px;height:17px;background:#f4f4f4;"></div>
<div class="t" style="left:1303.00px;top:174.00px;font-size:13px;line-height:13px;color:#e6e6e6;font-weight:400;font-family:'Liberation Sans',sans-serif;width:62px;text-align:center;margin-left:-31.0px;transform:scaleX(1.1);transform-origin:50% 0;">K</div>
<div style="left:1333px;top:172px;width:1px;height:17px;background:#f4f4f4;"></div>
<div class="t" style="left:1365.00px;top:174.00px;font-size:13px;line-height:13px;color:#e6e6e6;font-weight:400;font-family:'Liberation Sans',sans-serif;width:62px;text-align:center;margin-left:-31.0px;transform:scaleX(1.1);transform-origin:50% 0;">L</div>
<div style="left:1395px;top:172px;width:1px;height:17px;background:#f4f4f4;"></div>
<div class="t" style="left:1427.00px;top:174.00px;font-size:13px;line-height:13px;color:#e6e6e6;font-weight:400;font-family:'Liberation Sans',sans-serif;width:62px;text-align:center;margin-left:-31.0px;transform:scaleX(1.1);transform-origin:50% 0;">M</div>
<div style="left:1457px;top:172px;width:1px;height:17px;background:#f4f4f4;"></div>
<div class="t" style="left:1489.00px;top:174.00px;font-size:13px;line-height:13px;color:#e6e6e6;font-weight:400;font-family:'Liberation Sans',sans-serif;width:62px;text-align:center;margin-left:-31.0px;transform:scaleX(1.1);transform-origin:50% 0;">N</div>
<div style="left:1519px;top:172px;width:1px;height:17px;background:#f4f4f4;"></div>
<div class="t" style="left:1551.00px;top:174.00px;font-size:13px;line-height:13px;color:#e6e6e6;font-weight:400;font-family:'Liberation Sans',sans-serif;width:62px;text-align:center;margin-left:-31.0px;transform:scaleX(1.1);transform-origin:50% 0;">O</div>
<div style="left:1581px;top:172px;width:1px;height:17px;background:#f4f4f4;"></div>
<div class="t" style="left:1613.00px;top:174.00px;font-size:13px;line-height:13px;color:#e6e6e6;font-weight:400;font-family:'Liberation Sans',sans-serif;width:62px;text-align:center;margin-left:-31.0px;transform:scaleX(1.1);transform-origin:50% 0;">P</div>
<div style="left:1643px;top:172px;width:1px;height:17px;background:#f4f4f4;"></div>
<div class="t" style="left:1675.00px;top:174.00px;font-size:13px;line-height:13px;color:#e6e6e6;font-weight:400;font-family:'Liberation Sans',sans-serif;width:62px;text-align:center;margin-left:-31.0px;transform:scaleX(1.1);transform-origin:50% 0;">Q</div>
<div style="left:1705px;top:172px;width:1px;height:17px;background:#f4f4f4;"></div>
<div class="t" style="left:1737.00px;top:174.00px;font-size:13px;line-height:13px;color:#e6e6e6;font-weight:400;font-family:'Liberation Sans',sans-serif;width:62px;text-align:center;margin-left:-31.0px;transform:scaleX(1.1);transform-origin:50% 0;">R</div>
<div style="left:1767px;top:172px;width:1px;height:17px;background:#f4f4f4;"></div>
<div class="t" style="left:1799.00px;top:174.00px;font-size:13px;line-height:13px;color:#e6e6e6;font-weight:400;font-family:'Liberation Sans',sans-serif;width:62px;text-align:center;margin-left:-31.0px;transform:scaleX(1.1);transform-origin:50% 0;">S</div>
<div style="left:1829px;top:172px;width:1px;height:17px;background:#f4f4f4;"></div>
<div class="t" style="left:1861.00px;top:174.00px;font-size:13px;line-height:13px;color:#e6e6e6;font-weight:400;font-family:'Liberation Sans',sans-serif;width:62px;text-align:center;margin-left:-31.0px;transform:scaleX(1.1);transform-origin:50% 0;">T</div>
<div style="left:1891px;top:172px;width:1px;height:17px;background:#f4f4f4;"></div>
<div style="left:1023px;top:189px;width:873px;height:754px;background:#ffffff;"></div>
<div style="left:41px;top:189px;width:982px;height:754px;background:#cde8f6;"></div>
<div style="left:0px;top:189px;width:19px;height:754px;background:#87cbf2;"></div>
<div style="left:19px;top:189px;width:21px;height:754px;background:#3daee9;"></div>
<div style="left:40px;top:189px;width:1px;height:754px;background:#3b9fd6;"></div>
<div style="left:0px;top:209px;width:41px;height:1px;background:#3b9fd6;"></div>
<div style="left:0px;top:229px;width:41px;height:1px;background:#3b9fd6;"></div>
<div style="left:0px;top:263px;width:41px;height:1px;background:#3b9fd6;"></div>
<div style="left:0px;top:283px;width:41px;height:1px;background:#3b9fd6;"></div>
<div style="left:0px;top:437px;width:41px;height:1px;background:#3b9fd6;"></div>
<div style="left:0px;top:457px;width:41px;height:1px;background:#3b9fd6;"></div>
<div style="left:0px;top:477px;width:41px;height:1px;background:#3b9fd6;"></div>
<div style="left:0px;top:497px;width:41px;height:1px;background:#3b9fd6;"></div>
<div style="left:0px;top:517px;width:41px;height:1px;background:#3b9fd6;"></div>
<div style="left:0px;top:537px;width:41px;height:1px;background:#3b9fd6;"></div>
<div style="left:0px;top:557px;width:41px;height:1px;background:#3b9fd6;"></div>
<div style="left:0px;top:577px;width:41px;height:1px;background:#3b9fd6;"></div>
<div style="left:0px;top:597px;width:41px;height:1px;background:#3b9fd6;"></div>
<div style="left:0px;top:617px;width:41px;height:1px;background:#3b9fd6;"></div>
<div style="left:0px;top:637px;width:41px;height:1px;background:#3b9fd6;"></div>
<div style="left:0px;top:657px;width:41px;height:1px;background:#3b9fd6;"></div>
<div style="left:0px;top:677px;width:41px;height:1px;background:#3b9fd6;"></div>
<div style="left:0px;top:697px;width:41px;height:1px;background:#3b9fd6;"></div>
<div style="left:0px;top:717px;width:41px;height:1px;background:#3b9fd6;"></div>
<div style="left:0px;top:737px;width:41px;height:1px;background:#3b9fd6;"></div>
<div style="left:0px;top:757px;width:41px;height:1px;background:#3b9fd6;"></div>
<div style="left:0px;top:777px;width:41px;height:1px;background:#3b9fd6;"></div>
<div style="left:0px;top:797px;width:41px;height:1px;background:#3b9fd6;"></div>
<div style="left:0px;top:817px;width:41px;height:1px;background:#3b9fd6;"></div>
<div style="left:0px;top:837px;width:41px;height:1px;background:#3b9fd6;"></div>
<div style="left:0px;top:857px;width:41px;height:1px;background:#3b9fd6;"></div>
<div style="left:0px;top:877px;width:41px;height:1px;background:#3b9fd6;"></div>
<div style="left:0px;top:897px;width:41px;height:1px;background:#3b9fd6;"></div>
<div style="left:0px;top:917px;width:41px;height:1px;background:#3b9fd6;"></div>
<div style="left:0px;top:937px;width:41px;height:1px;background:#3b9fd6;"></div>
<div style="left:1085px;top:189px;width:1px;height:754px;background:#666666;"></div>
<div style="left:1147px;top:189px;width:1px;height:754px;background:#c0c0c0;"></div>
<div style="left:1209px;top:189px;width:1px;height:754px;background:#c0c0c0;"></div>
<div style="left:1271px;top:189px;width:1px;height:754px;background:#c0c0c0;"></div>
<div style="left:1333px;top:189px;width:1px;height:754px;background:#666666;"></div>
<div style="left:1395px;top:189px;width:1px;height:754px;background:#c0c0c0;"></div>
<div style="left:1457px;top:189px;width:1px;height:754px;background:#c0c0c0;"></div>
<div style="left:1519px;top:189px;width:1px;height:754px;background:#c0c0c0;"></div>
<div style="left:1581px;top:189px;width:1px;height:754px;background:#666666;"></div>
<div style="left:1643px;top:189px;width:1px;height:754px;background:#c0c0c0;"></div>
<div style="left:1705px;top:189px;width:1px;height:754px;background:#c0c0c0;"></div>
<div style="left:1767px;top:189px;width:1px;height:754px;background:#c0c0c0;"></div>
<div style="left:1829px;top:189px;width:1px;height:754px;background:#666666;"></div>
<div style="left:1891px;top:189px;width:1px;height:754px;background:#c0c0c0;"></div>
<div style="left:1023px;top:209px;width:873px;height:1px;background:#c0c0c0;"></div>
<div style="left:1023px;top:229px;width:873px;height:1px;background:#c0c0c0;"></div>
<div style="left:1023px;top:263px;width:873px;height:1px;background:#c0c0c0;"></div>
<div style="left:1023px;top:283px;width:873px;height:1px;background:#c0c0c0;"></div>
<div style="left:1023px;top:437px;width:873px;height:1px;background:#c0c0c0;"></div>
<div style="left:1023px;top:457px;width:873px;height:1px;background:#c0c0c0;"></div>
<div style="left:1023px;top:477px;width:873px;height:1px;background:#c0c0c0;"></div>
<div style="left:1023px;top:497px;width:873px;height:1px;background:#c0c0c0;"></div>
<div style="left:1023px;top:517px;width:873px;height:1px;background:#c0c0c0;"></div>
<div style="left:1023px;top:537px;width:873px;height:1px;background:#c0c0c0;"></div>
<div style="left:1023px;top:557px;width:873px;height:1px;background:#c0c0c0;"></div>
<div style="left:1023px;top:577px;width:873px;height:1px;background:#c0c0c0;"></div>
<div style="left:1023px;top:597px;width:873px;height:1px;background:#c0c0c0;"></div>
<div style="left:1023px;top:617px;width:873px;height:1px;background:#c0c0c0;"></div>
<div style="left:1023px;top:637px;width:873px;height:1px;background:#c0c0c0;"></div>
<div style="left:1023px;top:657px;width:873px;height:1px;background:#c0c0c0;"></div>
<div style="left:1023px;top:677px;width:873px;height:1px;background:#c0c0c0;"></div>
<div style="left:1023px;top:697px;width:873px;height:1px;background:#c0c0c0;"></div>
<div style="left:1023px;top:717px;width:873px;height:1px;background:#c0c0c0;"></div>
<div style="left:1023px;top:737px;width:873px;height:1px;background:#c0c0c0;"></div>
<div style="left:1023px;top:757px;width:873px;height:1px;background:#c0c0c0;"></div>
<div style="left:1023px;top:777px;width:873px;height:1px;background:#c0c0c0;"></div>
<div style="left:1023px;top:797px;width:873px;height:1px;background:#c0c0c0;"></div>
<div style="left:1023px;top:817px;width:873px;height:1px;background:#c0c0c0;"></div>
<div style="left:1023px;top:837px;width:873px;height:1px;background:#c0c0c0;"></div>
<div style="left:1023px;top:857px;width:873px;height:1px;background:#c0c0c0;"></div>
<div style="left:1023px;top:877px;width:873px;height:1px;background:#c0c0c0;"></div>
<div style="left:1023px;top:897px;width:873px;height:1px;background:#c0c0c0;"></div>
<div style="left:1023px;top:917px;width:873px;height:1px;background:#c0c0c0;"></div>
<div style="left:1023px;top:937px;width:873px;height:1px;background:#c0c0c0;"></div>
<div style="left:41px;top:209px;width:982px;height:1px;background:#9fbccb;"></div>
<div style="left:41px;top:229px;width:982px;height:1px;background:#9fbccb;"></div>
<div style="left:41px;top:263px;width:982px;height:1px;background:#9fbccb;"></div>
<div style="left:41px;top:457px;width:982px;height:1px;background:#9fbccb;"></div>
<div style="left:41px;top:477px;width:982px;height:1px;background:#9fbccb;"></div>
<div style="left:41px;top:497px;width:982px;height:1px;background:#9fbccb;"></div>
<div style="left:41px;top:517px;width:982px;height:1px;background:#9fbccb;"></div>
<div style="left:41px;top:537px;width:982px;height:1px;background:#9fbccb;"></div>
<div style="left:41px;top:557px;width:982px;height:1px;background:#9fbccb;"></div>
<div style="left:41px;top:577px;width:982px;height:1px;background:#9fbccb;"></div>
<div style="left:41px;top:597px;width:982px;height:1px;background:#9fbccb;"></div>
<div style="left:41px;top:617px;width:982px;height:1px;background:#9fbccb;"></div>
<div style="left:41px;top:637px;width:982px;height:1px;background:#9fbccb;"></div>
<div style="left:41px;top:657px;width:982px;height:1px;background:#9fbccb;"></div>
<div style="left:41px;top:677px;width:982px;height:1px;background:#9fbccb;"></div>
<div style="left:41px;top:697px;width:982px;height:1px;background:#9fbccb;"></div>
<div style="left:41px;top:717px;width:982px;height:1px;background:#9fbccb;"></div>
<div style="left:41px;top:737px;width:982px;height:1px;background:#9fbccb;"></div>
<div style="left:41px;top:757px;width:982px;height:1px;background:#9fbccb;"></div>
<div style="left:41px;top:777px;width:982px;height:1px;background:#9fbccb;"></div>
<div style="left:41px;top:797px;width:982px;height:1px;background:#9fbccb;"></div>
<div style="left:41px;top:817px;width:982px;height:1px;background:#9fbccb;"></div>
<div style="left:41px;top:837px;width:982px;height:1px;background:#9fbccb;"></div>
<div style="left:41px;top:857px;width:982px;height:1px;background:#9fbccb;"></div>
<div style="left:41px;top:877px;width:982px;height:1px;background:#9fbccb;"></div>
<div style="left:41px;top:897px;width:982px;height:1px;background:#9fbccb;"></div>
<div style="left:41px;top:917px;width:982px;height:1px;background:#9fbccb;"></div>
<div style="left:41px;top:937px;width:982px;height:1px;background:#9fbccb;"></div>
<div style="left:41px;top:263px;width:982px;height:1px;background:#9fbccb;"></div>
<div style="left:379px;top:437px;width:1px;height:506px;background:#9fbccb;"></div>
<div style="left:707px;top:437px;width:1px;height:506px;background:#9fbccb;"></div>
<div style="left:768px;top:437px;width:1px;height:506px;background:#9fbccb;"></div>
<div style="left:861px;top:437px;width:1px;height:506px;background:#9fbccb;"></div>
<div style="left:961px;top:437px;width:1px;height:506px;background:#9fbccb;"></div>
<div style="left:769px;top:189px;width:1px;height:754px;background:#b8c4cc;"></div>
<div style="left:41px;top:282px;width:982px;height:2px;background:#0b2230;"></div>
<div style="left:41px;top:435px;width:982px;height:2px;background:#0b2230;"></div>
<div style="left:707px;top:284px;width:1px;height:151px;background:#0b2230;"></div>
<div style="left:768px;top:284px;width:1px;height:151px;background:#0b2230;"></div>
<div style="left:861px;top:284px;width:1px;height:151px;background:#0b2230;"></div>
<div style="left:961px;top:284px;width:1px;height:151px;background:#0b2230;"></div>
<div style="left:769px;top:437px;width:1px;height:506px;background:#b0bec8;"></div>
<div style="left:767px;top:457px;width:2px;height:140px;background:#0b2230;"></div>
<div style="left:767px;top:617px;width:2px;height:140px;background:#0b2230;"></div>
<div style="left:767px;top:777px;width:2px;height:140px;background:#0b2230;"></div>
<div style="left:767px;top:937px;width:2px;height:6px;background:#0b2230;"></div>
<div style="left:41px;top:189px;width:982px;height:1px;background:#55606a;"></div>
<div style="left:41px;top:189px;width:1px;height:20px;background:#55606a;"></div>
<div style="left:41px;top:208px;width:982px;height:2px;background:#4a5a66;"></div>
<div style="left:1022px;top:189px;width:1px;height:20px;background:#55606a;"></div>
<div style="left:1022px;top:189px;width:2px;height:754px;background:repeating-linear-gradient(to bottom,#000 0 4px,transparent 4px 7px);"></div>
<div class="t" style="left:20.00px;top:193.00px;font-size:13px;line-height:13px;color:#ffffff;font-weight:700;font-family:'Liberation Sans',sans-serif;width:40px;text-align:center;margin-left:-20px;transform:scaleX(1.13);transform-origin:50% 0;">1</div>
<div class="t" style="left:20.00px;top:213.00px;font-size:13px;line-height:13px;color:#ffffff;font-weight:700;font-family:'Liberation Sans',sans-serif;width:40px;text-align:center;margin-left:-20px;transform:scaleX(1.13);transform-origin:50% 0;">2</div>
<div class="t" style="left:20.00px;top:240.00px;font-size:13px;line-height:13px;color:#ffffff;font-weight:700;font-family:'Liberation Sans',sans-serif;width:40px;text-align:center;margin-left:-20px;transform:scaleX(1.13);transform-origin:50% 0;">3</div>
<div class="t" style="left:20.00px;top:267.00px;font-size:13px;line-height:13px;color:#ffffff;font-weight:700;font-family:'Liberation Sans',sans-serif;width:40px;text-align:center;margin-left:-20px;transform:scaleX(1.13);transform-origin:50% 0;">4</div>
<div class="t" style="left:20.00px;top:354.00px;font-size:13px;line-height:13px;color:#ffffff;font-weight:700;font-family:'Liberation Sans',sans-serif;width:40px;text-align:center;margin-left:-20px;transform:scaleX(1.13);transform-origin:50% 0;">5</div>
<div class="t" style="left:20.00px;top:441.00px;font-size:13px;line-height:13px;color:#ffffff;font-weight:700;font-family:'Liberation Sans',sans-serif;width:40px;text-align:center;margin-left:-20px;transform:scaleX(1.13);transform-origin:50% 0;">6</div>
<div class="t" style="left:20.00px;top:461.00px;font-size:13px;line-height:13px;color:#ffffff;font-weight:700;font-family:'Liberation Sans',sans-serif;width:40px;text-align:center;margin-left:-20px;transform:scaleX(1.13);transform-origin:50% 0;">7</div>
<div class="t" style="left:20.00px;top:481.00px;font-size:13px;line-height:13px;color:#ffffff;font-weight:700;font-family:'Liberation Sans',sans-serif;width:40px;text-align:center;margin-left:-20px;transform:scaleX(1.13);transform-origin:50% 0;">8</div>
<div class="t" style="left:20.00px;top:501.00px;font-size:13px;line-height:13px;color:#ffffff;font-weight:700;font-family:'Liberation Sans',sans-serif;width:40px;text-align:center;margin-left:-20px;transform:scaleX(1.13);transform-origin:50% 0;">9</div>
<div class="t" style="left:20.00px;top:521.00px;font-size:13px;line-height:13px;color:#ffffff;font-weight:700;font-family:'Liberation Sans',sans-serif;width:40px;text-align:center;margin-left:-20px;transform:scaleX(1.13);transform-origin:50% 0;">10</div>
<div class="t" style="left:20.00px;top:541.00px;font-size:13px;line-height:13px;color:#ffffff;font-weight:700;font-family:'Liberation Sans',sans-serif;width:40px;text-align:center;margin-left:-20px;transform:scaleX(1.13);transform-origin:50% 0;">11</div>
<div class="t" style="left:20.00px;top:561.00px;font-size:13px;line-height:13px;color:#ffffff;font-weight:700;font-family:'Liberation Sans',sans-serif;width:40px;text-align:center;margin-left:-20px;transform:scaleX(1.13);transform-origin:50% 0;">12</div>
<div class="t" style="left:20.00px;top:581.00px;font-size:13px;line-height:13px;color:#ffffff;font-weight:700;font-family:'Liberation Sans',sans-serif;width:40px;text-align:center;margin-left:-20px;transform:scaleX(1.13);transform-origin:50% 0;">13</div>
<div class="t" style="left:20.00px;top:601.00px;font-size:13px;line-height:13px;color:#ffffff;font-weight:700;font-family:'Liberation Sans',sans-serif;width:40px;text-align:center;margin-left:-20px;transform:scaleX(1.13);transform-origin:50% 0;">14</div>
<div class="t" style="left:20.00px;top:621.00px;font-size:13px;line-height:13px;color:#ffffff;font-weight:700;font-family:'Liberation Sans',sans-serif;width:40px;text-align:center;margin-left:-20px;transform:scaleX(1.13);transform-origin:50% 0;">15</div>
<div class="t" style="left:20.00px;top:641.00px;font-size:13px;line-height:13px;color:#ffffff;font-weight:700;font-family:'Liberation Sans',sans-serif;width:40px;text-align:center;margin-left:-20px;transform:scaleX(1.13);transform-origin:50% 0;">16</div>
<div class="t" style="left:20.00px;top:661.00px;font-size:13px;line-height:13px;color:#ffffff;font-weight:700;font-family:'Liberation Sans',sans-serif;width:40px;text-align:center;margin-left:-20px;transform:scaleX(1.13);transform-origin:50% 0;">17</div>
<div class="t" style="left:20.00px;top:681.00px;font-size:13px;line-height:13px;color:#ffffff;font-weight:700;font-family:'Liberation Sans',sans-serif;width:40px;text-align:center;margin-left:-20px;transform:scaleX(1.13);transform-origin:50% 0;">18</div>
<div class="t" style="left:20.00px;top:701.00px;font-size:13px;line-height:13px;color:#ffffff;font-weight:700;font-family:'Liberation Sans',sans-serif;width:40px;text-align:center;margin-left:-20px;transform:scaleX(1.13);transform-origin:50% 0;">19</div>
<div class="t" style="left:20.00px;top:721.00px;font-size:13px;line-height:13px;color:#ffffff;font-weight:700;font-family:'Liberation Sans',sans-serif;width:40px;text-align:center;margin-left:-20px;transform:scaleX(1.13);transform-origin:50% 0;">20</div>
<div class="t" style="left:20.00px;top:741.00px;font-size:13px;line-height:13px;color:#ffffff;font-weight:700;font-family:'Liberation Sans',sans-serif;width:40px;text-align:center;margin-left:-20px;transform:scaleX(1.13);transform-origin:50% 0;">21</div>
<div class="t" style="left:20.00px;top:761.00px;font-size:13px;line-height:13px;color:#ffffff;font-weight:700;font-family:'Liberation Sans',sans-serif;width:40px;text-align:center;margin-left:-20px;transform:scaleX(1.13);transform-origin:50% 0;">22</div>
<div class="t" style="left:20.00px;top:781.00px;font-size:13px;line-height:13px;color:#ffffff;font-weight:700;font-family:'Liberation Sans',sans-serif;width:40px;text-align:center;margin-left:-20px;transform:scaleX(1.13);transform-origin:50% 0;">23</div>
<div class="t" style="left:20.00px;top:801.00px;font-size:13px;line-height:13px;color:#ffffff;font-weight:700;font-family:'Liberation Sans',sans-serif;width:40px;text-align:center;margin-left:-20px;transform:scaleX(1.13);transform-origin:50% 0;">24</div>
<div class="t" style="left:20.00px;top:821.00px;font-size:13px;line-height:13px;color:#ffffff;font-weight:700;font-family:'Liberation Sans',sans-serif;width:40px;text-align:center;margin-left:-20px;transform:scaleX(1.13);transform-origin:50% 0;">25</div>
<div class="t" style="left:20.00px;top:841.00px;font-size:13px;line-height:13px;color:#ffffff;font-weight:700;font-family:'Liberation Sans',sans-serif;width:40px;text-align:center;margin-left:-20px;transform:scaleX(1.13);transform-origin:50% 0;">26</div>
<div class="t" style="left:20.00px;top:861.00px;font-size:13px;line-height:13px;color:#ffffff;font-weight:700;font-family:'Liberation Sans',sans-serif;width:40px;text-align:center;margin-left:-20px;transform:scaleX(1.13);transform-origin:50% 0;">27</div>
<div class="t" style="left:20.00px;top:881.00px;font-size:13px;line-height:13px;color:#ffffff;font-weight:700;font-family:'Liberation Sans',sans-serif;width:40px;text-align:center;margin-left:-20px;transform:scaleX(1.13);transform-origin:50% 0;">28</div>
<div class="t" style="left:20.00px;top:901.00px;font-size:13px;line-height:13px;color:#ffffff;font-weight:700;font-family:'Liberation Sans',sans-serif;width:40px;text-align:center;margin-left:-20px;transform:scaleX(1.13);transform-origin:50% 0;">29</div>
<div class="t" style="left:20.00px;top:921.00px;font-size:13px;line-height:13px;color:#ffffff;font-weight:700;font-family:'Liberation Sans',sans-serif;width:40px;text-align:center;margin-left:-20px;transform:scaleX(1.13);transform-origin:50% 0;">30</div>
<div class="t" style="left:20.00px;top:941.00px;font-size:13px;line-height:13px;color:#ffffff;font-weight:700;font-family:'Liberation Sans',sans-serif;width:40px;text-align:center;margin-left:-20px;transform:scaleX(1.13);transform-origin:50% 0;">31</div>
<div class="t" style="left:42.00px;top:192.57px;font-size:13.5px;line-height:13.5px;color:#0f2633;font-weight:700;font-family:'Liberation Sans',sans-serif;transform:scaleX(0.9631);">Personen, die das Internet im 1. Quartal genutzt haben:</div>
<div class="t" style="left:42.00px;top:212.57px;font-size:13.5px;line-height:13.5px;color:#0f2633;font-weight:700;font-family:'Liberation Sans',sans-serif;transform:scaleX(0.9533);">Deutschland, Früheres Bundesgebiet/Neue Länder, Jahre,</div>
<div class="t" style="left:42.00px;top:239.07px;font-size:13.5px;line-height:13.5px;color:#0f2633;font-weight:700;font-family:'Liberation Sans',sans-serif;transform:scaleX(0.9728);">Einkaufen/Bestellen über das Internet</div>
<div class="t" style="left:42.00px;top:266.57px;font-size:13.5px;line-height:13.5px;color:#0f2633;font-weight:400;font-family:'Liberation Sans',sans-serif;transform:scaleX(1.0175);">Informations- und Kommunikationstechnologien (IKT)</div>
<div class="t" style="left:248.50px;top:317.57px;font-size:13.5px;line-height:13.5px;color:#0f2633;font-weight:400;font-family:'Liberation Sans',sans-serif;transform:scaleX(0.9808);">Erfasste Personen, die das Internet nutzen</div>
<div class="t" style="left:350.00px;top:331.57px;font-size:13.5px;line-height:13.5px;color:#0f2633;font-weight:400;font-family:'Liberation Sans',sans-serif;transform:scaleX(1.0674);">----------</div>
<div class="t" style="left:223.25px;top:345.57px;font-size:13.5px;line-height:13.5px;color:#0f2633;font-weight:400;font-family:'Liberation Sans',sans-serif;transform:scaleX(0.9870);">Hochgerechnete Personen, die das Internet nutzen</div>
<div class="t" style="left:350.00px;top:359.57px;font-size:13.5px;line-height:13.5px;color:#0f2633;font-weight:400;font-family:'Liberation Sans',sans-serif;transform:scaleX(1.0674);">----------</div>
<div class="t" style="left:273.25px;top:373.57px;font-size:13.5px;line-height:13.5px;color:#0f2633;font-weight:400;font-family:'Liberation Sans',sans-serif;transform:scaleX(0.9944);">Personen, die das Internet nutzen</div>
<div class="t" style="left:261.00px;top:387.57px;font-size:13.5px;line-height:13.5px;color:#0f2633;font-weight:400;font-family:'Liberation Sans',sans-serif;transform:scaleX(1.0037);">Einkaufen/Bestellen über das Internet</div>
<div class="t" style="left:709.50px;top:352.57px;font-size:13.5px;line-height:13.5px;color:#0f2633;font-weight:400;font-family:'Liberation Sans',sans-serif;transform:scaleX(0.9690);">Einheit</div>
<div class="t" style="left:771.00px;top:352.57px;font-size:13.5px;line-height:13.5px;color:#0f2633;font-weight:400;font-family:'Liberation Sans',sans-serif;transform:scaleX(0.9925);">Deutschland</div>
<div class="t" style="left:863.00px;top:345.57px;font-size:13.5px;line-height:13.5px;color:#0f2633;font-weight:400;font-family:'Liberation Sans',sans-serif;transform:scaleX(0.9624);">Früheres</div>
<div class="t" style="left:863.00px;top:359.57px;font-size:13.5px;line-height:13.5px;color:#0f2633;font-weight:400;font-family:'Liberation Sans',sans-serif;transform:scaleX(0.9869);">Bundesgebiet</div>
<div class="t" style="left:976.50px;top:345.57px;font-size:13.5px;line-height:13.5px;color:#0f2633;font-weight:400;font-family:'Liberation Sans',sans-serif;transform:scaleX(0.9603);">Neue</div>
<div class="t" style="left:971.25px;top:359.57px;font-size:13.5px;line-height:13.5px;color:#0f2633;font-weight:400;font-family:'Liberation Sans',sans-serif;transform:scaleX(0.9870);">Länder</div>
<div class="t" style="left:42.00px;top:442.57px;font-size:13.5px;line-height:13.5px;color:#0f2633;font-weight:400;font-family:'Liberation Sans',sans-serif;transform:scaleX(1.0151);">2006</div>
<div class="t" style="left:42.00px;top:462.57px;font-size:13.5px;line-height:13.5px;color:#0f2633;font-weight:400;font-family:'Liberation Sans',sans-serif;transform:scaleX(0.9847);">Erfasste Personen, die das Internet nutzen</div>
<div class="t" style="left:42.00px;top:482.57px;font-size:13.5px;line-height:13.5px;color:#0f2633;font-weight:400;font-family:'Liberation Sans',sans-serif;transform:scaleX(0.9886);">Hochgerechnete Personen, die das Internet nutzen</div>
<div class="t" style="left:42.00px;top:502.57px;font-size:13.5px;line-height:13.5px;color:#0f2633;font-weight:400;font-family:'Liberation Sans',sans-serif;transform:scaleX(0.9968);">Personen, die das Internet nutzen</div>
<div class="t" style="left:381.00px;top:502.57px;font-size:13.5px;line-height:13.5px;color:#0f2633;font-weight:400;font-family:'Liberation Sans',sans-serif;transform:scaleX(1.0210);">Kauf von Waren/Dienstleistungen im Internet</div>
<div class="t" style="left:381.00px;top:522.57px;font-size:13.5px;line-height:13.5px;color:#0f2633;font-weight:400;font-family:'Liberation Sans',sans-serif;transform:scaleX(1.0519);">Urlaubsunterkünfte</div>
<div class="t" style="left:381.00px;top:542.57px;font-size:13.5px;line-height:13.5px;color:#0f2633;font-weight:400;font-family:'Liberation Sans',sans-serif;transform:scaleX(0.9942);">Kauf / Bestellung in Deutschland</div>
<div class="t" style="left:381.00px;top:562.57px;font-size:13.5px;line-height:13.5px;color:#0f2633;font-weight:400;font-family:'Liberation Sans',sans-serif;transform:scaleX(0.9794);">Kauf / Bestellung aus der EU (außer Deutschland)</div>
<div class="t" style="left:381.00px;top:582.57px;font-size:13.5px;line-height:13.5px;color:#0f2633;font-weight:400;font-family:'Liberation Sans',sans-serif;transform:scaleX(0.9794);">Kauf / Bestellung außerhalb der EU</div>
<div class="t" style="left:709.00px;top:462.57px;font-size:13.5px;line-height:13.5px;color:#0f2633;font-weight:400;font-family:'Liberation Sans',sans-serif;transform:scaleX(0.9811);">Anzahl</div>
<div class="t" style="left:709.00px;top:482.57px;font-size:13.5px;line-height:13.5px;color:#0f2633;font-weight:400;font-family:'Liberation Sans',sans-serif;transform:scaleX(1.0151);">1000</div>
<div class="t" style="left:709.00px;top:502.57px;font-size:13.5px;line-height:13.5px;color:#0f2633;font-weight:400;font-family:'Liberation Sans',sans-serif;transform:scaleX(0.9950);">Prozent</div>
<div class="t" style="left:709.00px;top:522.57px;font-size:13.5px;line-height:13.5px;color:#0f2633;font-weight:400;font-family:'Liberation Sans',sans-serif;transform:scaleX(0.9950);">Prozent</div>
<div class="t" style="left:709.00px;top:542.57px;font-size:13.5px;line-height:13.5px;color:#0f2633;font-weight:400;font-family:'Liberation Sans',sans-serif;transform:scaleX(0.9950);">Prozent</div>
<div class="t" style="left:709.00px;top:562.57px;font-size:13.5px;line-height:13.5px;color:#0f2633;font-weight:400;font-family:'Liberation Sans',sans-serif;transform:scaleX(0.9950);">Prozent</div>
<div class="t" style="left:709.00px;top:582.57px;font-size:13.5px;line-height:13.5px;color:#0f2633;font-weight:400;font-family:'Liberation Sans',sans-serif;transform:scaleX(0.9950);">Prozent</div>
<div class="t" style="left:771.00px;top:460.57px;font-size:13.5px;line-height:13.5px;color:#0f2633;font-weight:400;font-family:'Liberation Sans',sans-serif;transform:scaleX(1.0147);">17725</div>
<div class="t" style="left:863.00px;top:460.57px;font-size:13.5px;line-height:13.5px;color:#0f2633;font-weight:400;font-family:'Liberation Sans',sans-serif;transform:scaleX(1.0147);">14676</div>
<div class="t" style="left:963.00px;top:460.57px;font-size:13.5px;line-height:13.5px;color:#0f2633;font-weight:400;font-family:'Liberation Sans',sans-serif;transform:scaleX(1.0144);">3049</div>
<div class="t" style="left:771.00px;top:480.57px;font-size:13.5px;line-height:13.5px;color:#0f2633;font-weight:400;font-family:'Liberation Sans',sans-serif;transform:scaleX(1.0147);">48519</div>
<div class="t" style="left:863.00px;top:480.57px;font-size:13.5px;line-height:13.5px;color:#0f2633;font-weight:400;font-family:'Liberation Sans',sans-serif;transform:scaleX(1.0147);">40520</div>
<div class="t" style="left:963.00px;top:480.57px;font-size:13.5px;line-height:13.5px;color:#0f2633;font-weight:400;font-family:'Liberation Sans',sans-serif;transform:scaleX(1.0144);">7999</div>
<div class="t" style="left:771.00px;top:500.57px;font-size:13.5px;line-height:13.5px;color:#0f2633;font-weight:400;font-family:'Liberation Sans',sans-serif;transform:scaleX(1.0030);">72,4</div>
<div class="t" style="left:863.00px;top:500.57px;font-size:13.5px;line-height:13.5px;color:#0f2633;font-weight:400;font-family:'Liberation Sans',sans-serif;transform:scaleX(1.0030);">72,8</div>
<div class="t" style="left:963.00px;top:500.57px;font-size:13.5px;line-height:13.5px;color:#0f2633;font-weight:400;font-family:'Liberation Sans',sans-serif;transform:scaleX(1.0030);">70,3</div>
<div style="left:771px;top:527px;width:4px;height:1px;background:#0f2633;"></div>
<div style="left:863px;top:527px;width:4px;height:1px;background:#0f2633;"></div>
<div style="left:963px;top:527px;width:4px;height:1px;background:#0f2633;"></div>
<div style="left:771px;top:547px;width:4px;height:1px;background:#0f2633;"></div>
<div style="left:863px;top:547px;width:4px;height:1px;background:#0f2633;"></div>
<div style="left:963px;top:547px;width:4px;height:1px;background:#0f2633;"></div>
<div style="left:771px;top:567px;width:4px;height:1px;background:#0f2633;"></div>
<div style="left:863px;top:567px;width:4px;height:1px;background:#0f2633;"></div>
<div style="left:963px;top:567px;width:4px;height:1px;background:#0f2633;"></div>
<div style="left:771px;top:587px;width:4px;height:1px;background:#0f2633;"></div>
<div style="left:863px;top:587px;width:4px;height:1px;background:#0f2633;"></div>
<div style="left:963px;top:587px;width:4px;height:1px;background:#0f2633;"></div>
<div class="t" style="left:42.00px;top:602.57px;font-size:13.5px;line-height:13.5px;color:#0f2633;font-weight:400;font-family:'Liberation Sans',sans-serif;transform:scaleX(1.0151);">2007</div>
<div class="t" style="left:42.00px;top:622.57px;font-size:13.5px;line-height:13.5px;color:#0f2633;font-weight:400;font-family:'Liberation Sans',sans-serif;transform:scaleX(0.9847);">Erfasste Personen, die das Internet nutzen</div>
<div class="t" style="left:42.00px;top:642.57px;font-size:13.5px;line-height:13.5px;color:#0f2633;font-weight:400;font-family:'Liberation Sans',sans-serif;transform:scaleX(0.9886);">Hochgerechnete Personen, die das Internet nutzen</div>
<div class="t" style="left:42.00px;top:662.57px;font-size:13.5px;line-height:13.5px;color:#0f2633;font-weight:400;font-family:'Liberation Sans',sans-serif;transform:scaleX(0.9968);">Personen, die das Internet nutzen</div>
<div class="t" style="left:381.00px;top:662.57px;font-size:13.5px;line-height:13.5px;color:#0f2633;font-weight:400;font-family:'Liberation Sans',sans-serif;transform:scaleX(1.0210);">Kauf von Waren/Dienstleistungen im Internet</div>
<div class="t" style="left:381.00px;top:682.57px;font-size:13.5px;line-height:13.5px;color:#0f2633;font-weight:400;font-family:'Liberation Sans',sans-serif;transform:scaleX(1.0519);">Urlaubsunterkünfte</div>
<div class="t" style="left:381.00px;top:702.57px;font-size:13.5px;line-height:13.5px;color:#0f2633;font-weight:400;font-family:'Liberation Sans',sans-serif;transform:scaleX(0.9942);">Kauf / Bestellung in Deutschland</div>
<div class="t" style="left:381.00px;top:722.57px;font-size:13.5px;line-height:13.5px;color:#0f2633;font-weight:400;font-family:'Liberation Sans',sans-serif;transform:scaleX(0.9794);">Kauf / Bestellung aus der EU (außer Deutschland)</div>
<div class="t" style="left:381.00px;top:742.57px;font-size:13.5px;line-height:13.5px;color:#0f2633;font-weight:400;font-family:'Liberation Sans',sans-serif;transform:scaleX(0.9794);">Kauf / Bestellung außerhalb der EU</div>
<div class="t" style="left:709.00px;top:622.57px;font-size:13.5px;line-height:13.5px;color:#0f2633;font-weight:400;font-family:'Liberation Sans',sans-serif;transform:scaleX(0.9811);">Anzahl</div>
<div class="t" style="left:709.00px;top:642.57px;font-size:13.5px;line-height:13.5px;color:#0f2633;font-weight:400;font-family:'Liberation Sans',sans-serif;transform:scaleX(1.0151);">1000</div>
<div class="t" style="left:709.00px;top:662.57px;font-size:13.5px;line-height:13.5px;color:#0f2633;font-weight:400;font-family:'Liberation Sans',sans-serif;transform:scaleX(0.9950);">Prozent</div>
<div class="t" style="left:709.00px;top:682.57px;font-size:13.5px;line-height:13.5px;color:#0f2633;font-weight:400;font-family:'Liberation Sans',sans-serif;transform:scaleX(0.9950);">Prozent</div>
<div class="t" style="left:709.00px;top:702.57px;font-size:13.5px;line-height:13.5px;color:#0f2633;font-weight:400;font-family:'Liberation Sans',sans-serif;transform:scaleX(0.9950);">Prozent</div>
<div class="t" style="left:709.00px;top:722.57px;font-size:13.5px;line-height:13.5px;color:#0f2633;font-weight:400;font-family:'Liberation Sans',sans-serif;transform:scaleX(0.9950);">Prozent</div>
<div class="t" style="left:709.00px;top:742.57px;font-size:13.5px;line-height:13.5px;color:#0f2633;font-weight:400;font-family:'Liberation Sans',sans-serif;transform:scaleX(0.9950);">Prozent</div>
<div class="t" style="left:771.00px;top:620.57px;font-size:13.5px;line-height:13.5px;color:#0f2633;font-weight:400;font-family:'Liberation Sans',sans-serif;transform:scaleX(1.0147);">16759</div>
<div class="t" style="left:863.00px;top:620.57px;font-size:13.5px;line-height:13.5px;color:#0f2633;font-weight:400;font-family:'Liberation Sans',sans-serif;transform:scaleX(1.0147);">13800</div>
<div class="t" style="left:963.00px;top:620.57px;font-size:13.5px;line-height:13.5px;color:#0f2633;font-weight:400;font-family:'Liberation Sans',sans-serif;transform:scaleX(1.0144);">2959</div>
<div class="t" style="left:771.00px;top:640.57px;font-size:13.5px;line-height:13.5px;color:#0f2633;font-weight:400;font-family:'Liberation Sans',sans-serif;transform:scaleX(1.0147);">50635</div>
<div class="t" style="left:863.00px;top:640.57px;font-size:13.5px;line-height:13.5px;color:#0f2633;font-weight:400;font-family:'Liberation Sans',sans-serif;transform:scaleX(1.0147);">42530</div>
<div class="t" style="left:963.00px;top:640.57px;font-size:13.5px;line-height:13.5px;color:#0f2633;font-weight:400;font-family:'Liberation Sans',sans-serif;transform:scaleX(1.0144);">8104</div>
<div class="t" style="left:771.00px;top:660.57px;font-size:13.5px;line-height:13.5px;color:#0f2633;font-weight:400;font-family:'Liberation Sans',sans-serif;transform:scaleX(1.0030);">73,3</div>
<div class="t" style="left:863.00px;top:660.57px;font-size:13.5px;line-height:13.5px;color:#0f2633;font-weight:400;font-family:'Liberation Sans',sans-serif;transform:scaleX(1.0030);">73,5</div>
<div class="t" style="left:963.00px;top:660.57px;font-size:13.5px;line-height:13.5px;color:#0f2633;font-weight:400;font-family:'Liberation Sans',sans-serif;transform:scaleX(1.0139);">72</div>
<div style="left:771px;top:687px;width:4px;height:1px;background:#0f2633;"></div>
<div style="left:863px;top:687px;width:4px;height:1px;background:#0f2633;"></div>
<div style="left:963px;top:687px;width:4px;height:1px;background:#0f2633;"></div>
<div style="left:771px;top:707px;width:4px;height:1px;background:#0f2633;"></div>
<div style="left:863px;top:707px;width:4px;height:1px;background:#0f2633;"></div>
<div style="left:963px;top:707px;width:4px;height:1px;background:#0f2633;"></div>
<div style="left:771px;top:727px;width:4px;height:1px;background:#0f2633;"></div>
<div style="left:863px;top:727px;width:4px;height:1px;background:#0f2633;"></div>
<div style="left:963px;top:727px;width:4px;height:1px;background:#0f2633;"></div>
<div style="left:771px;top:747px;width:4px;height:1px;background:#0f2633;"></div>
<div style="left:863px;top:747px;width:4px;height:1px;background:#0f2633;"></div>
<div style="left:963px;top:747px;width:4px;height:1px;background:#0f2633;"></div>
<div class="t" style="left:42.00px;top:762.57px;font-size:13.5px;line-height:13.5px;color:#0f2633;font-weight:400;font-family:'Liberation Sans',sans-serif;transform:scaleX(1.0151);">2008</div>
<div class="t" style="left:42.00px;top:782.57px;font-size:13.5px;line-height:13.5px;color:#0f2633;font-weight:400;font-family:'Liberation Sans',sans-serif;transform:scaleX(0.9847);">Erfasste Personen, die das Internet nutzen</div>
<div class="t" style="left:42.00px;top:802.57px;font-size:13.5px;line-height:13.5px;color:#0f2633;font-weight:400;font-family:'Liberation Sans',sans-serif;transform:scaleX(0.9886);">Hochgerechnete Personen, die das Internet nutzen</div>
<div class="t" style="left:42.00px;top:822.57px;font-size:13.5px;line-height:13.5px;color:#0f2633;font-weight:400;font-family:'Liberation Sans',sans-serif;transform:scaleX(0.9968);">Personen, die das Internet nutzen</div>
<div class="t" style="left:381.00px;top:822.57px;font-size:13.5px;line-height:13.5px;color:#0f2633;font-weight:400;font-family:'Liberation Sans',sans-serif;transform:scaleX(1.0210);">Kauf von Waren/Dienstleistungen im Internet</div>
<div class="t" style="left:381.00px;top:842.57px;font-size:13.5px;line-height:13.5px;color:#0f2633;font-weight:400;font-family:'Liberation Sans',sans-serif;transform:scaleX(1.0519);">Urlaubsunterkünfte</div>
<div class="t" style="left:381.00px;top:862.57px;font-size:13.5px;line-height:13.5px;color:#0f2633;font-weight:400;font-family:'Liberation Sans',sans-serif;transform:scaleX(0.9942);">Kauf / Bestellung in Deutschland</div>
<div class="t" style="left:381.00px;top:882.57px;font-size:13.5px;line-height:13.5px;color:#0f2633;font-weight:400;font-family:'Liberation Sans',sans-serif;transform:scaleX(0.9794);">Kauf / Bestellung aus der EU (außer Deutschland)</div>
<div class="t" style="left:381.00px;top:902.57px;font-size:13.5px;line-height:13.5px;color:#0f2633;font-weight:400;font-family:'Liberation Sans',sans-serif;transform:scaleX(0.9794);">Kauf / Bestellung außerhalb der EU</div>
<div class="t" style="left:709.00px;top:782.57px;font-size:13.5px;line-height:13.5px;color:#0f2633;font-weight:400;font-family:'Liberation Sans',sans-serif;transform:scaleX(0.9811);">Anzahl</div>
<div class="t" style="left:709.00px;top:802.57px;font-size:13.5px;line-height:13.5px;color:#0f2633;font-weight:400;font-family:'Liberation Sans',sans-serif;transform:scaleX(1.0151);">1000</div>
<div class="t" style="left:709.00px;top:822.57px;font-size:13.5px;line-height:13.5px;color:#0f2633;font-weight:400;font-family:'Liberation Sans',sans-serif;transform:scaleX(0.9950);">Prozent</div>
<div class="t" style="left:709.00px;top:842.57px;font-size:13.5px;line-height:13.5px;color:#0f2633;font-weight:400;font-family:'Liberation Sans',sans-serif;transform:scaleX(0.9950);">Prozent</div>
<div class="t" style="left:709.00px;top:862.57px;font-size:13.5px;line-height:13.5px;color:#0f2633;font-weight:400;font-family:'Liberation Sans',sans-serif;transform:scaleX(0.9950);">Prozent</div>
<div class="t" style="left:709.00px;top:882.57px;font-size:13.5px;line-height:13.5px;color:#0f2633;font-weight:400;font-family:'Liberation Sans',sans-serif;transform:scaleX(0.9950);">Prozent</div>
<div class="t" style="left:709.00px;top:902.57px;font-size:13.5px;line-height:13.5px;color:#0f2633;font-weight:400;font-family:'Liberation Sans',sans-serif;transform:scaleX(0.9950);">Prozent</div>
<div class="t" style="left:771.00px;top:780.57px;font-size:13.5px;line-height:13.5px;color:#0f2633;font-weight:400;font-family:'Liberation Sans',sans-serif;transform:scaleX(1.0147);">18158</div>
<div class="t" style="left:863.00px;top:780.57px;font-size:13.5px;line-height:13.5px;color:#0f2633;font-weight:400;font-family:'Liberation Sans',sans-serif;transform:scaleX(1.0147);">15236</div>
<div class="t" style="left:963.00px;top:780.57px;font-size:13.5px;line-height:13.5px;color:#0f2633;font-weight:400;font-family:'Liberation Sans',sans-serif;transform:scaleX(1.0144);">2922</div>
<div class="t" style="left:771.00px;top:800.57px;font-size:13.5px;line-height:13.5px;color:#0f2633;font-weight:400;font-family:'Liberation Sans',sans-serif;transform:scaleX(1.0147);">52573</div>
<div class="t" style="left:863.00px;top:800.57px;font-size:13.5px;line-height:13.5px;color:#0f2633;font-weight:400;font-family:'Liberation Sans',sans-serif;transform:scaleX(1.0147);">44385</div>
<div class="t" style="left:963.00px;top:800.57px;font-size:13.5px;line-height:13.5px;color:#0f2633;font-weight:400;font-family:'Liberation Sans',sans-serif;transform:scaleX(1.0144);">8188</div>
<div class="t" style="left:771.00px;top:820.57px;font-size:13.5px;line-height:13.5px;color:#0f2633;font-weight:400;font-family:'Liberation Sans',sans-serif;transform:scaleX(1.0030);">74,6</div>
<div class="t" style="left:863.00px;top:820.57px;font-size:13.5px;line-height:13.5px;color:#0f2633;font-weight:400;font-family:'Liberation Sans',sans-serif;transform:scaleX(1.0030);">74,9</div>
<div class="t" style="left:963.00px;top:820.57px;font-size:13.5px;line-height:13.5px;color:#0f2633;font-weight:400;font-family:'Liberation Sans',sans-serif;transform:scaleX(1.0030);">73,2</div>
<div style="left:771px;top:847px;width:4px;height:1px;background:#0f2633;"></div>
<div style="left:863px;top:847px;width:4px;height:1px;background:#0f2633;"></div>
<div style="left:963px;top:847px;width:4px;height:1px;background:#0f2633;"></div>
<div style="left:771px;top:867px;width:4px;height:1px;background:#0f2633;"></div>
<div style="left:863px;top:867px;width:4px;height:1px;background:#0f2633;"></div>
<div style="left:963px;top:867px;width:4px;height:1px;background:#0f2633;"></div>
<div style="left:771px;top:887px;width:4px;height:1px;background:#0f2633;"></div>
<div style="left:863px;top:887px;width:4px;height:1px;background:#0f2633;"></div>
<div style="left:963px;top:887px;width:4px;height:1px;background:#0f2633;"></div>
<div style="left:771px;top:907px;width:4px;height:1px;background:#0f2633;"></div>
<div style="left:863px;top:907px;width:4px;height:1px;background:#0f2633;"></div>
<div style="left:963px;top:907px;width:4px;height:1px;background:#0f2633;"></div>
<div class="t" style="left:42.00px;top:922.57px;font-size:13.5px;line-height:13.5px;color:#0f2633;font-weight:400;font-family:'Liberation Sans',sans-serif;transform:scaleX(1.0151);">2009</div>
<div style="left:1896px;top:171px;width:15px;height:772px;background:#31363b;"></div>
<svg style="position:absolute;left:1899px;top:176px;" width="10" height="6" viewBox="0 0 10 6"><path d="M1 5l4-4 4 4" stroke="#b0b2b5" stroke-width="1.2" fill="none"/></svg>
<div style="left:1899px;top:186px;width:10px;height:743px;background:#6b6e72;border-radius:2px;"></div>
<div style="left:1899px;top:188px;width:10px;height:141px;background:#b0b1b4;border-radius:5px;"></div>
<svg style="position:absolute;left:1899px;top:932px;" width="10" height="6" viewBox="0 0 10 6"><path d="M1 1l4 4 4-4" stroke="#fff" stroke-width="1.4" fill="none"/></svg>
<div style="left:1912px;top:136px;width:2px;height:841px;background:#6b6e72;"></div>
<div style="left:1912px;top:136px;width:7px;height:2px;background:#6b6e72;"></div>
<div style="left:1912px;top:975px;width:7px;height:2px;background:#6b6e72;"></div>
<div style="left:1912px;top:520px;width:7px;height:73px;background:#eff0f1;"></div>
<svg style="position:absolute;left:1913px;top:551px;" width="6" height="10" viewBox="0 0 6 10"><path d="M5 0v10L0 5z" fill="#31363b"/></svg>
<div style="left:0px;top:943px;width:1911px;height:96px;background:#31363b;"></div>
<div style="left:0px;top:943px;width:1896px;height:2px;background:#232629;"></div>
<svg style="position:absolute;left:5px;top:946px;" width="6" height="10" viewBox="0 0 6 10"><path d="M5 1L1 5l4 4" stroke="#b0b2b5" stroke-width="1.2" fill="none"/></svg>
<div style="left:15px;top:946px;width:1868px;height:10px;background:#6b6e72;border-radius:2px;"></div>
<div style="left:15px;top:946px;width:878px;height:10px;background:#b0b1b4;border-radius:5px;"></div>
<svg style="position:absolute;left:1886px;top:946px;" width="6" height="10" viewBox="0 0 6 10"><path d="M1 1l4 4-4 4" stroke="#fff" stroke-width="1.4" fill="none"/></svg>
<svg style="position:absolute;left:12px;top:963px;" width="8" height="10" viewBox="0 0 8 10"><path d="M0 0h2v10H0zM8 0v10L2 5z" fill="#7e8185"/></svg>
<svg style="position:absolute;left:30px;top:963px;" width="7" height="10" viewBox="0 0 7 10"><path d="M7 0v10L0 5z" fill="#7e8185"/></svg>
<svg style="position:absolute;left:48px;top:963px;" width="7" height="10" viewBox="0 0 7 10"><path d="M0 0v10l7-5z" fill="#7e8185"/></svg>
<svg style="position:absolute;left:65px;top:963px;" width="8" height="10" viewBox="0 0 8 10"><path d="M8 0H6v10h2zM0 0v10l6-5z" fill="#7e8185"/></svg>
<svg style="position:absolute;left:88px;top:962px;" width="11" height="11" viewBox="0 0 11 11"><path d="M5.5 0v11M0 5.5h11" stroke="#fff" stroke-width="2"/></svg>
<div style="left:108px;top:959px;width:90px;height:19px;background:#232629;box-sizing:border-box;border:1px solid #f0f0f0;border-top:none;"></div>
<div class="t" style="left:120.00px;top:961.00px;font-size:13px;line-height:13px;color:#ffffff;font-weight:700;font-family:'Liberation Sans',sans-serif;transform:scaleX(1.1017);">Temporär</div>
<div style="left:3px;top:984px;width:3px;height:3px;background:#5d6166;"></div>
<div style="left:3px;top:988px;width:3px;height:3px;background:#5d6166;"></div>
<div style="left:3px;top:992px;width:3px;height:3px;background:#5d6166;"></div>
<div style="left:3px;top:996px;width:3px;height:3px;background:#5d6166;"></div>
<div style="left:3px;top:1000px;width:3px;height:3px;background:#5d6166;"></div>
<div style="left:3px;top:1004px;width:3px;height:3px;background:#5d6166;"></div>
<div style="left:3px;top:1008px;width:3px;height:3px;background:#5d6166;"></div>
<svg style="position:absolute;left:20px;top:989px;" width="17" height="17" viewBox="0 0 17 17"><path d="M2 2l13 13M15 2L2 15" stroke="#6a6a6a" stroke-width="3.5"/></svg>
<div style="left:45px;top:981px;width:222px;height:32px;background:#232629;box-sizing:border-box;border:1px solid #55595e;border-radius:3px;"></div>
<div class="t" style="left:53.00px;top:989.57px;font-size:13.5px;line-height:13.5px;color:#8a8d90;font-weight:400;font-family:'Liberation Sans',sans-serif;transform:scaleX(1.0044);">Suchen</div>
<div style="left:269px;top:981px;width:23px;height:32px;background:#31363b;box-sizing:border-box;border:1px solid #55595e;border-radius:3px;"></div>
<svg style="position:absolute;left:274px;top:994px;" width="12" height="7" viewBox="0 0 12 7"><path d="M1 1h10L6 6z" fill="#eff0f1"/></svg>
<svg style="position:absolute;left:303px;top:988px;" width="17" height="17" viewBox="0 0 17 17"><path d="M8.5 1L1 8.5h5V16h5V8.5h5z" fill="#43474b"/></svg>
<svg style="position:absolute;left:336px;top:988px;" width="17" height="17" viewBox="0 0 17 17"><path d="M8.5 16L1 8.5h5V1h5v7.5h5z" fill="#43474b"/></svg>
<div class="t" style="left:364.00px;top:989.57px;font-size:13.5px;line-height:13.5px;color:#eff0f1;font-weight:400;font-family:'Liberation Sans',sans-serif;transform:scaleX(0.9743);">Alle suchen</div>
<div style="left:444px;top:989px;width:16px;height:16px;background:transparent;box-sizing:border-box;border:1px solid #6a6e72;border-radius:2px;"></div>
<div class="t" style="left:467.00px;top:989.57px;font-size:13.5px;line-height:13.5px;color:#eff0f1;font-weight:400;font-family:'Liberation Sans',sans-serif;transform:scaleX(1.0843);">Formatierte Anzeige</div>
<div style="left:605px;top:989px;width:16px;height:16px;background:transparent;box-sizing:border-box;border:1px solid #6a6e72;border-radius:2px;"></div>
<div class="t" style="left:628.00px;top:989.57px;font-size:13.5px;line-height:13.5px;color:#eff0f1;font-weight:400;font-family:'Liberation Sans',sans-serif;transform:scaleX(1.0588);">Groß-/Kleinschreibung</div>
<div style="left:779px;top:983px;width:1px;height:30px;background:#50555a;"></div>
<svg style="position:absolute;left:789px;top:986px;" width="24" height="24" viewBox="0 0 24 24"><defs><radialGradient id="mg" cx="40%" cy="30%" r="70%"><stop offset="0" stop-color="#c8c8c8"/><stop offset="1" stop-color="#5a5c5e"/></radialGradient></defs><circle cx="9" cy="9" r="6.5" fill="url(#mg)" stroke="#3a3c3e" stroke-width=".8"/><path d="M14 14l6 5" stroke="#555" stroke-width="2.2"/><path d="M6.5 21.5l11-11" stroke="#111" stroke-width="4.6"/><path d="M7 20.5l10-10" stroke="#666" stroke-width="2"/><path d="M15.8 9.5l1.6-1.6 2.6 2.6-1.6 1.6z" fill="#cfcfcf"/><path d="M17.4 7.9l1.8-1.8 2.6 2.6-1.8 1.8z" fill="#e8a0e0"/><path d="M4 23l1.5-5 3.5 3.5z" fill="#f0e070" stroke="#6a6020" stroke-width=".6"/></svg>
<div style="left:820px;top:983px;width:1px;height:30px;background:#50555a;"></div>
<div style="left:0px;top:1018px;width:1920px;height:1px;background:#6b6e72;"></div>
<div style="left:0px;top:1019px;width:1920px;height:20px;background:linear-gradient(#31363b,#1f2225);"></div>
<div class="t" style="left:10.00px;top:1023.00px;font-size:13px;line-height:13px;color:#dcdddf;font-weight:400;font-family:'Liberation Sans',sans-serif;transform:scaleX(1.0063);">Tabelle 1 von 1</div>
<div style="left:303px;top:1022px;width:1px;height:14px;background:#c8c8c8;"></div>
<div style="left:709px;top:1022px;width:1px;height:14px;background:#c8c8c8;"></div>
<div style="left:1041px;top:1022px;width:1px;height:14px;background:#c8c8c8;"></div>
<div style="left:1109px;top:1022px;width:1px;height:14px;background:#c8c8c8;"></div>
<div style="left:1138px;top:1022px;width:1px;height:14px;background:#c8c8c8;"></div>
<div style="left:1167px;top:1022px;width:1px;height:14px;background:#c8c8c8;"></div>
<div style="left:1196px;top:1022px;width:1px;height:14px;background:#c8c8c8;"></div>
<div style="left:1722px;top:1022px;width:1px;height:14px;background:#c8c8c8;"></div>
<div style="left:1865px;top:1022px;width:1px;height:14px;background:#c8c8c8;"></div>
<div class="t" style="left:312.00px;top:1023.00px;font-size:13px;line-height:13px;color:#dcdddf;font-weight:400;font-family:'Liberation Sans',sans-serif;transform:scaleX(1.0507);">108 Zeilen, 6 Spalten ausgewählt</div>
<div class="t" style="left:718.00px;top:1023.00px;font-size:13px;line-height:13px;color:#dcdddf;font-weight:400;font-family:'Liberation Sans',sans-serif;transform:scaleX(0.9967);">PageStyle_Temporär</div>
<div style="left:1118px;top:1024px;width:10px;height:7px;background:#1a1a1a;"></div>
<div style="left:1128px;top:1023px;width:1px;height:9px;background:#777;"></div>
<svg style="position:absolute;left:1146px;top:1022px;" width="14" height="14" viewBox="0 0 14 14"><path d="M1 0h8l4 4v10H1z" fill="#e0e0f8" stroke="#6a6ac8" stroke-width=".8"/><path d="M3 6h8M3 8h8M3 10h8M3 12h8" stroke="#6a6ac8" stroke-width="1"/></svg>
<div class="t" style="left:1306.00px;top:1023.00px;font-size:13px;line-height:13px;color:#dcdddf;font-weight:400;font-family:'Liberation Sans',sans-serif;transform:scaleX(1.0887);">Mittelwert: 8530,09230769231; Summe: 1663368</div>
<div style="left:1733px;top:1028px;width:8px;height:2px;background:#6b6e72;"></div>
<div style="left:1747px;top:1029px;width:97px;height:2px;background:#6b6e72;"></div>
<div style="left:1791px;top:1024px;width:9px;height:9px;background:#e0e0e0;border-radius:50%;"></div>
<svg style="position:absolute;left:1849px;top:1024px;" width="9" height="9" viewBox="0 0 9 9"><path d="M4.5 0v9M0 4.5h9" stroke="#6b6e72" stroke-width="2"/></svg>
<div class="t" style="left:1873.00px;top:1023.00px;font-size:13px;line-height:13px;color:#dcdddf;font-weight:400;font-family:'Liberation Sans',sans-serif;transform:scaleX(1.0034);">100 %</div>
<div style="left:0px;top:1039px;width:1920px;height:11px;background:#2a2d31;"></div>
<div style="left:0px;top:1039px;width:1920px;height:1px;background:#3a3e42;"></div>
<div style="left:451px;top:1041px;width:199px;height:9px;background:#33373b;box-sizing:border-box;border-top:1px solid #0e0e0e;border-left:1px solid #0e0e0e;"></div>
<svg style="position:absolute;left:9px;top:1046px;" width="22" height="4" viewBox="0 0 22 4"><path d="M0 4L4 0l4 4z" fill="#e8f4fa"/><path d="M13 4l4-4 4 4z" fill="#8ad0f0"/></svg>
<div style="left:50px;top:1047px;width:24px;height:3px;background:#d0d0d0;border-radius:3px 3px 0 0;"></div>
<div style="left:93px;top:1047px;width:18px;height:3px;background:#2a9ae0;border-radius:9px 9px 0 0;"></div>
<div style="left:133px;top:1047px;width:18px;height:3px;background:#d84a3a;border-radius:9px 9px 0 0;"></div>
<div style="left:174px;top:1047px;width:16px;height:3px;background:#3a8ad8;border-radius:9px 9px 0 0;"></div>
<div style="left:248px;top:1048px;width:28px;height:2px;background:#8a8a8a;"></div>
<div style="left:291px;top:1046px;width:22px;height:4px;background:transparent;box-sizing:border-box;border:2px solid #20c020;border-bottom:none;border-radius:11px 11px 0 0;"></div>
<div style="left:334px;top:1048px;width:4px;height:2px;background:#bbbbbb;border-radius:2px 2px 0 0;"></div>
<div style="left:373px;top:1047px;width:7px;height:3px;background:#3a7ad8;border-radius:4px 4px 0 0;"></div>
<div style="left:410px;top:1048px;width:25px;height:2px;background:transparent;box-sizing:border-box;border:1px solid #6a30b0;border-bottom:none;"></div>
<div style="left:442px;top:1041px;width:6px;height:9px;background:#3a3e42;"></div>
</body></html>
